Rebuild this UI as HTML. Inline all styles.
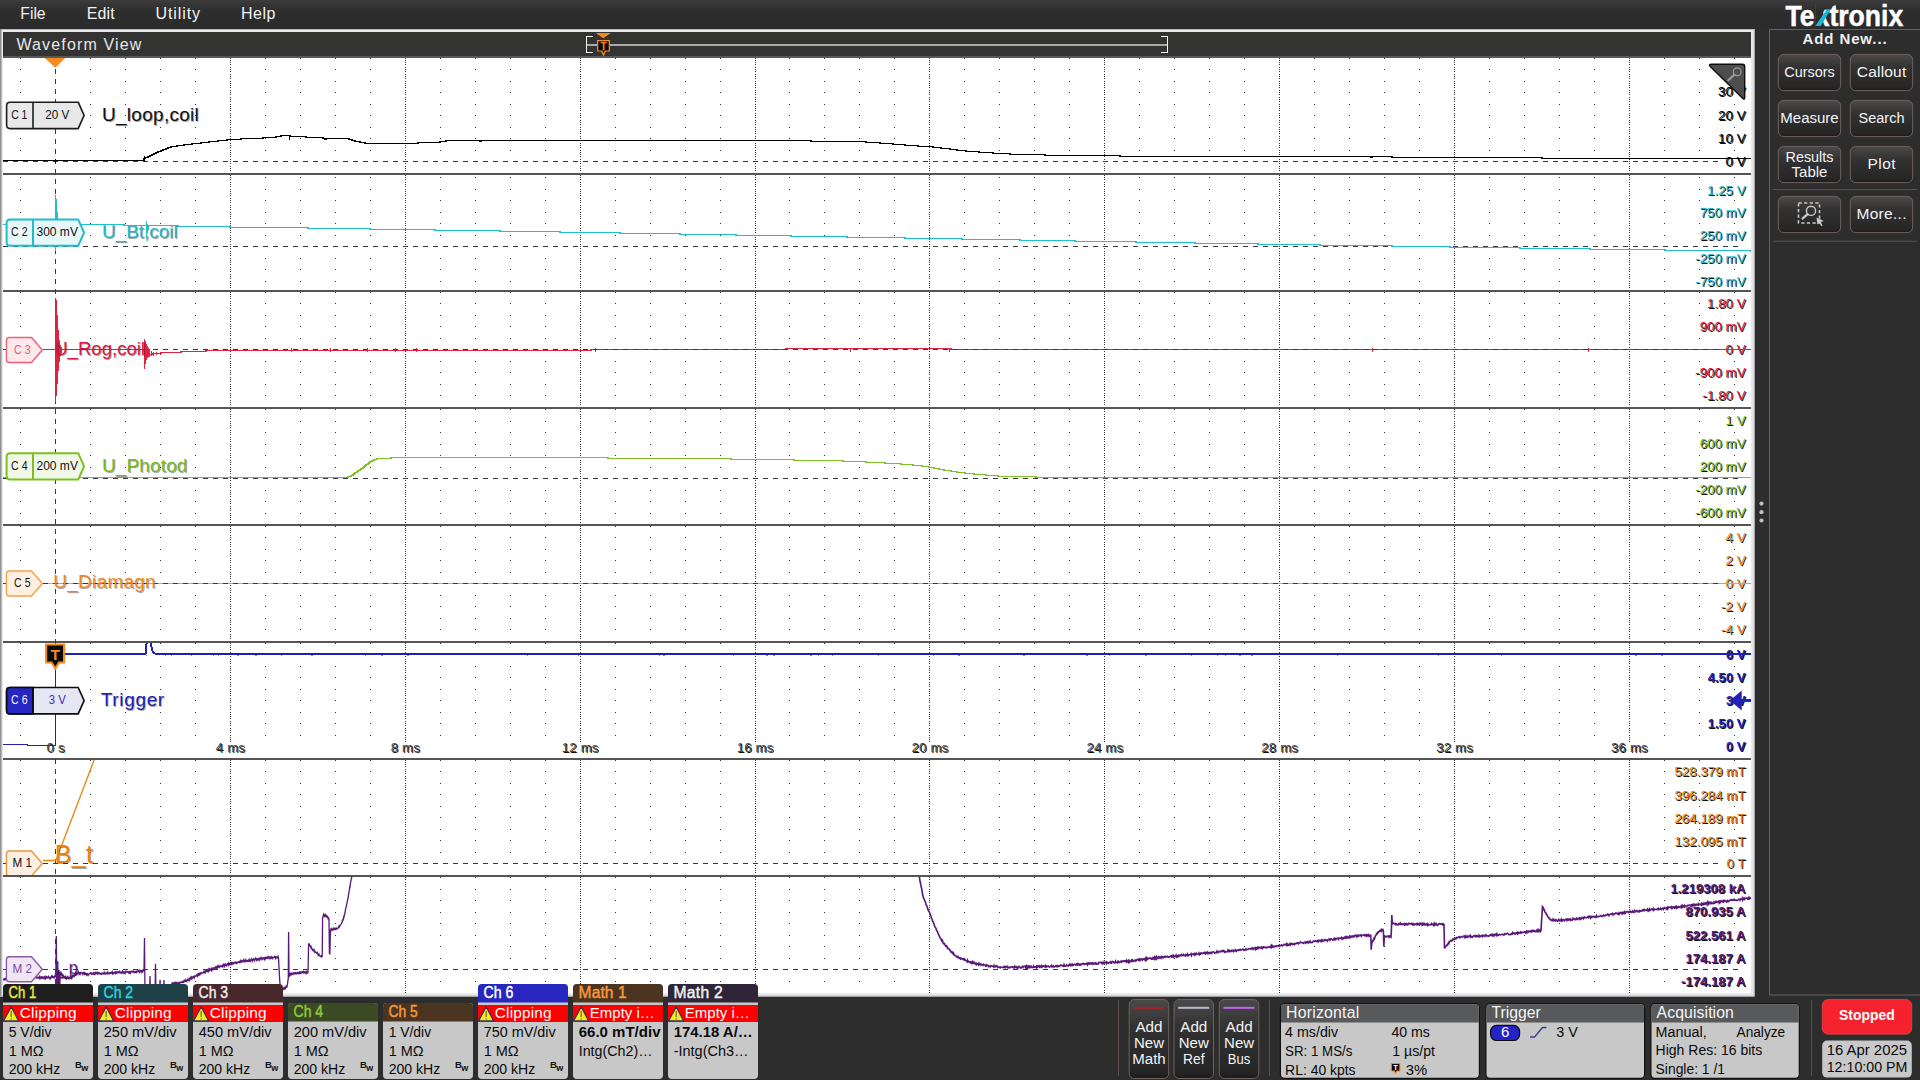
<!DOCTYPE html>
<html><head><meta charset="utf-8"><title>Waveform View</title>
<style>
html,body{margin:0;padding:0;background:#2d2d2d;overflow:hidden}
svg{display:block;font-family:'Liberation Sans', sans-serif}
text{white-space:pre}
.sh{text-shadow:1px 1px 0 rgba(0,0,0,.95)}
.sl{text-shadow:1px 1px 0 rgba(0,0,0,.35)}
.ce{shape-rendering:crispEdges}
</style></head><body>
<svg width="1920" height="1080" viewBox="0 0 1920 1080">
<defs>
<linearGradient id="mb" gradientUnits="userSpaceOnUse" x1="0" y1="0" x2="0" y2="28.5"><stop offset="0" stop-color="#3c3c3c"/><stop offset="0.35" stop-color="#2e2e2e"/><stop offset="1" stop-color="#2b2b2b"/></linearGradient>
<linearGradient id="bt" x1="0" y1="0" x2="0" y2="1"><stop offset="0" stop-color="#4a4a4b"/><stop offset="0.35" stop-color="#323233"/><stop offset="0.9" stop-color="#262626"/><stop offset="1" stop-color="#1c1c1c"/></linearGradient>
</defs>
<rect x="0" y="0" width="1920" height="1080" fill="#2d2d2d" />
<rect x="0" y="0" width="1920" height="28.5" fill="url(#mb)" />
<text x="20.3" y="18.7" font-size="16" fill="#f2f2f2" textLength="25.3" lengthAdjust="spacingAndGlyphs">File</text>
<text x="86.7" y="18.7" font-size="16" fill="#f2f2f2" textLength="28.1" lengthAdjust="spacing">Edit</text>
<text x="155.5" y="18.7" font-size="16" fill="#f2f2f2" textLength="44.5" lengthAdjust="spacing">Utility</text>
<text x="241" y="18.7" font-size="16" fill="#f2f2f2" textLength="34.5" lengthAdjust="spacing">Help</text>
<rect x="0" y="29" width="1754.5" height="967.5" fill="#e9e9eb" />
<rect x="0" y="29" width="1754.5" height="0.8" fill="#b0b0b2" />
<rect x="0" y="29" width="1.5" height="967" fill="#909092" />
<rect x="1753.5" y="29.5" width="1" height="966.5" fill="#c9c9cc" />
<rect x="0" y="995.5" width="1754.5" height="1" fill="#bdbdbf" />
<rect x="3" y="32" width="1748" height="24" fill="#333332" />
<rect x="3" y="56" width="1748" height="2" fill="#58595b" />
<text x="16.4" y="49.7" font-size="16" fill="#e6e6e6" textLength="125" lengthAdjust="spacing">Waveform View</text>
<g fill="none" stroke="#f4f4f4" stroke-width="1" class="ce"><path d="M593,36.5H586.5V52.5H593"/><path d="M1161,36.5H1167.5V52.5H1161"/></g>
<rect x="587" y="44" width="580" height="2" fill="#a9a9a9" />
<path d="M595.8,33H610.8L603.3,38.2Z" fill="#f58a1f"/>
<path d="M597,40H610V51.5H605.8L603.5,56.5L601.2,51.5H597Z" fill="#f58a1f"/>
<rect x="598.3" y="41.3" width="10.4" height="9.2" fill="#0a0a0a" />
<path d="M602.2,50.4L603.5,53.2L604.8,50.4Z" fill="#0a0a0a"/>
<text x="603.5" y="49.8" font-size="10" fill="#f58a1f" text-anchor="middle" font-weight="bold">T</text>
<rect x="3" y="58" width="1748" height="935" fill="#ffffff" />
<defs><path id="dr" d="M20,0.5h1M90,0.5h1M125,0.5h1M160,0.5h1M195,0.5h1M265,0.5h1M300,0.5h1M335,0.5h1M370,0.5h1M440,0.5h1M475,0.5h1M510,0.5h1M545,0.5h1M615,0.5h1M650,0.5h1M685,0.5h1M720,0.5h1M789,0.5h1M824,0.5h1M859,0.5h1M894,0.5h1M964,0.5h1M999,0.5h1M1034,0.5h1M1069,0.5h1M1139,0.5h1M1174,0.5h1M1209,0.5h1M1244,0.5h1M1314,0.5h1M1349,0.5h1M1384,0.5h1M1419,0.5h1M1489,0.5h1M1524,0.5h1M1559,0.5h1M1594,0.5h1M1664,0.5h1M1699,0.5h1M1734,0.5h1" stroke="#303030" stroke-width="1" class="ce"/></defs>
<use href="#dr" y="58"/><use href="#dr" y="69"/><use href="#dr" y="81"/><use href="#dr" y="92"/><use href="#dr" y="104"/><use href="#dr" y="115"/><use href="#dr" y="127"/><use href="#dr" y="138"/><use href="#dr" y="150"/>
<use href="#dr" y="177"/><use href="#dr" y="189"/><use href="#dr" y="200"/><use href="#dr" y="212"/><use href="#dr" y="223"/><use href="#dr" y="235"/><use href="#dr" y="258"/><use href="#dr" y="269"/><use href="#dr" y="281"/>
<use href="#dr" y="292"/><use href="#dr" y="303"/><use href="#dr" y="315"/><use href="#dr" y="326"/><use href="#dr" y="338"/><use href="#dr" y="361"/><use href="#dr" y="372"/><use href="#dr" y="384"/><use href="#dr" y="395"/>
<use href="#dr" y="409"/><use href="#dr" y="421"/><use href="#dr" y="432"/><use href="#dr" y="444"/><use href="#dr" y="455"/><use href="#dr" y="467"/><use href="#dr" y="490"/><use href="#dr" y="501"/><use href="#dr" y="513"/>
<use href="#dr" y="526"/><use href="#dr" y="537"/><use href="#dr" y="549"/><use href="#dr" y="560"/><use href="#dr" y="572"/><use href="#dr" y="595"/><use href="#dr" y="606"/><use href="#dr" y="618"/><use href="#dr" y="629"/>
<use href="#dr" y="643"/><use href="#dr" y="654"/><use href="#dr" y="666"/><use href="#dr" y="677"/><use href="#dr" y="689"/><use href="#dr" y="700"/><use href="#dr" y="712"/><use href="#dr" y="723"/><use href="#dr" y="735"/>
<use href="#dr" y="760"/><use href="#dr" y="771"/><use href="#dr" y="783"/><use href="#dr" y="794"/><use href="#dr" y="806"/><use href="#dr" y="817"/><use href="#dr" y="829"/><use href="#dr" y="840"/><use href="#dr" y="852"/>
<use href="#dr" y="877"/><use href="#dr" y="889"/><use href="#dr" y="900"/><use href="#dr" y="912"/><use href="#dr" y="923"/><use href="#dr" y="935"/><use href="#dr" y="946"/><use href="#dr" y="958"/><use href="#dr" y="981"/>
<defs><path id="vc0" d="M0,58.5h1M0,60.5h1M0,62.5h1M0,64.5h1M0,67.5h1M0,69.5h1M0,71.5h1M0,74.5h1M0,76.5h1M0,78.5h1M0,81.5h1M0,83.5h1M0,85.5h1M0,87.5h1M0,90.5h1M0,92.5h1M0,94.5h1M0,97.5h1M0,99.5h1M0,101.5h1M0,104.5h1M0,106.5h1M0,108.5h1M0,110.5h1M0,113.5h1M0,115.5h1M0,117.5h1M0,120.5h1M0,122.5h1M0,124.5h1M0,127.5h1M0,129.5h1M0,131.5h1M0,133.5h1M0,136.5h1M0,138.5h1M0,140.5h1M0,143.5h1M0,145.5h1M0,147.5h1M0,150.5h1M0,152.5h1M0,154.5h1M0,156.5h1M0,159.5h1M0,161.5h1M0,163.5h1M0,166.5h1M0,168.5h1M0,170.5h1" stroke="#333" stroke-width="1" class="ce"/><path id="vc1" d="M0,175.5h1M0,177.5h1M0,179.5h1M0,182.5h1M0,184.5h1M0,186.5h1M0,189.5h1M0,191.5h1M0,193.5h1M0,195.5h1M0,198.5h1M0,200.5h1M0,202.5h1M0,205.5h1M0,207.5h1M0,209.5h1M0,212.5h1M0,214.5h1M0,216.5h1M0,218.5h1M0,221.5h1M0,223.5h1M0,225.5h1M0,228.5h1M0,230.5h1M0,232.5h1M0,235.5h1M0,237.5h1M0,239.5h1M0,241.5h1M0,244.5h1M0,246.5h1M0,248.5h1M0,251.5h1M0,253.5h1M0,255.5h1M0,258.5h1M0,260.5h1M0,262.5h1M0,264.5h1M0,267.5h1M0,269.5h1M0,271.5h1M0,274.5h1M0,276.5h1M0,278.5h1M0,281.5h1M0,283.5h1M0,285.5h1M0,287.5h1" stroke="#333" stroke-width="1" class="ce"/><path id="vc2" d="M0,292.5h1M0,294.5h1M0,296.5h1M0,298.5h1M0,301.5h1M0,303.5h1M0,305.5h1M0,308.5h1M0,310.5h1M0,312.5h1M0,315.5h1M0,317.5h1M0,319.5h1M0,321.5h1M0,324.5h1M0,326.5h1M0,328.5h1M0,331.5h1M0,333.5h1M0,335.5h1M0,338.5h1M0,340.5h1M0,342.5h1M0,344.5h1M0,347.5h1M0,349.5h1M0,351.5h1M0,354.5h1M0,356.5h1M0,358.5h1M0,361.5h1M0,363.5h1M0,365.5h1M0,367.5h1M0,370.5h1M0,372.5h1M0,374.5h1M0,377.5h1M0,379.5h1M0,381.5h1M0,384.5h1M0,386.5h1M0,388.5h1M0,390.5h1M0,393.5h1M0,395.5h1M0,397.5h1M0,400.5h1M0,402.5h1M0,404.5h1" stroke="#333" stroke-width="1" class="ce"/><path id="vc3" d="M0,409.5h1M0,411.5h1M0,414.5h1M0,416.5h1M0,418.5h1M0,421.5h1M0,423.5h1M0,425.5h1M0,427.5h1M0,430.5h1M0,432.5h1M0,434.5h1M0,437.5h1M0,439.5h1M0,441.5h1M0,444.5h1M0,446.5h1M0,448.5h1M0,450.5h1M0,453.5h1M0,455.5h1M0,457.5h1M0,460.5h1M0,462.5h1M0,464.5h1M0,467.5h1M0,469.5h1M0,471.5h1M0,473.5h1M0,476.5h1M0,478.5h1M0,480.5h1M0,483.5h1M0,485.5h1M0,487.5h1M0,490.5h1M0,492.5h1M0,494.5h1M0,496.5h1M0,499.5h1M0,501.5h1M0,503.5h1M0,506.5h1M0,508.5h1M0,510.5h1M0,513.5h1M0,515.5h1M0,517.5h1M0,519.5h1M0,522.5h1" stroke="#333" stroke-width="1" class="ce"/><path id="vc4" d="M0,526.5h1M0,528.5h1M0,530.5h1M0,532.5h1M0,535.5h1M0,537.5h1M0,539.5h1M0,542.5h1M0,544.5h1M0,546.5h1M0,549.5h1M0,551.5h1M0,553.5h1M0,555.5h1M0,558.5h1M0,560.5h1M0,562.5h1M0,565.5h1M0,567.5h1M0,569.5h1M0,572.5h1M0,574.5h1M0,576.5h1M0,578.5h1M0,581.5h1M0,583.5h1M0,585.5h1M0,588.5h1M0,590.5h1M0,592.5h1M0,595.5h1M0,597.5h1M0,599.5h1M0,601.5h1M0,604.5h1M0,606.5h1M0,608.5h1M0,611.5h1M0,613.5h1M0,615.5h1M0,618.5h1M0,620.5h1M0,622.5h1M0,624.5h1M0,627.5h1M0,629.5h1M0,631.5h1M0,634.5h1M0,636.5h1M0,638.5h1" stroke="#333" stroke-width="1" class="ce"/><path id="vc5" d="M0,643.5h1M0,645.5h1M0,647.5h1M0,649.5h1M0,652.5h1M0,654.5h1M0,656.5h1M0,659.5h1M0,661.5h1M0,663.5h1M0,666.5h1M0,668.5h1M0,670.5h1M0,672.5h1M0,675.5h1M0,677.5h1M0,679.5h1M0,682.5h1M0,684.5h1M0,686.5h1M0,689.5h1M0,691.5h1M0,693.5h1M0,695.5h1M0,698.5h1M0,700.5h1M0,702.5h1M0,705.5h1M0,707.5h1M0,709.5h1M0,712.5h1M0,714.5h1M0,716.5h1M0,718.5h1M0,721.5h1M0,723.5h1M0,725.5h1M0,728.5h1M0,730.5h1M0,732.5h1M0,735.5h1M0,737.5h1M0,739.5h1M0,741.5h1M0,744.5h1M0,746.5h1M0,748.5h1M0,751.5h1M0,753.5h1M0,755.5h1" stroke="#333" stroke-width="1" class="ce"/><path id="vc6" d="M0,760.5h1M0,762.5h1M0,764.5h1M0,766.5h1M0,769.5h1M0,771.5h1M0,773.5h1M0,776.5h1M0,778.5h1M0,780.5h1M0,783.5h1M0,785.5h1M0,787.5h1M0,789.5h1M0,792.5h1M0,794.5h1M0,796.5h1M0,799.5h1M0,801.5h1M0,803.5h1M0,806.5h1M0,808.5h1M0,810.5h1M0,812.5h1M0,815.5h1M0,817.5h1M0,819.5h1M0,822.5h1M0,824.5h1M0,826.5h1M0,829.5h1M0,831.5h1M0,833.5h1M0,835.5h1M0,838.5h1M0,840.5h1M0,842.5h1M0,845.5h1M0,847.5h1M0,849.5h1M0,852.5h1M0,854.5h1M0,856.5h1M0,858.5h1M0,861.5h1M0,863.5h1M0,865.5h1M0,868.5h1M0,870.5h1M0,872.5h1" stroke="#333" stroke-width="1" class="ce"/><path id="vc7" d="M0,877.5h1M0,879.5h1M0,882.5h1M0,884.5h1M0,886.5h1M0,889.5h1M0,891.5h1M0,893.5h1M0,895.5h1M0,898.5h1M0,900.5h1M0,902.5h1M0,905.5h1M0,907.5h1M0,909.5h1M0,912.5h1M0,914.5h1M0,916.5h1M0,918.5h1M0,921.5h1M0,923.5h1M0,925.5h1M0,928.5h1M0,930.5h1M0,932.5h1M0,935.5h1M0,937.5h1M0,939.5h1M0,941.5h1M0,944.5h1M0,946.5h1M0,948.5h1M0,951.5h1M0,953.5h1M0,955.5h1M0,958.5h1M0,960.5h1M0,962.5h1M0,964.5h1M0,967.5h1M0,969.5h1M0,971.5h1M0,974.5h1M0,976.5h1M0,978.5h1M0,981.5h1M0,983.5h1M0,985.5h1M0,987.5h1M0,990.5h1M0,992.5h1" stroke="#333" stroke-width="1" class="ce"/></defs>
<use href="#vc0" x="230"/><use href="#vc0" x="405"/><use href="#vc0" x="580"/><use href="#vc0" x="755"/><use href="#vc0" x="929"/><use href="#vc0" x="1104"/><use href="#vc0" x="1279"/><use href="#vc0" x="1454"/><use href="#vc0" x="1629"/>
<use href="#vc1" x="230"/><use href="#vc1" x="405"/><use href="#vc1" x="580"/><use href="#vc1" x="755"/><use href="#vc1" x="929"/><use href="#vc1" x="1104"/><use href="#vc1" x="1279"/><use href="#vc1" x="1454"/><use href="#vc1" x="1629"/>
<use href="#vc2" x="230"/><use href="#vc2" x="405"/><use href="#vc2" x="580"/><use href="#vc2" x="755"/><use href="#vc2" x="929"/><use href="#vc2" x="1104"/><use href="#vc2" x="1279"/><use href="#vc2" x="1454"/><use href="#vc2" x="1629"/>
<use href="#vc3" x="230"/><use href="#vc3" x="405"/><use href="#vc3" x="580"/><use href="#vc3" x="755"/><use href="#vc3" x="929"/><use href="#vc3" x="1104"/><use href="#vc3" x="1279"/><use href="#vc3" x="1454"/><use href="#vc3" x="1629"/>
<use href="#vc4" x="230"/><use href="#vc4" x="405"/><use href="#vc4" x="580"/><use href="#vc4" x="755"/><use href="#vc4" x="929"/><use href="#vc4" x="1104"/><use href="#vc4" x="1279"/><use href="#vc4" x="1454"/><use href="#vc4" x="1629"/>
<use href="#vc5" x="230"/><use href="#vc5" x="405"/><use href="#vc5" x="580"/><use href="#vc5" x="755"/><use href="#vc5" x="929"/><use href="#vc5" x="1104"/><use href="#vc5" x="1279"/><use href="#vc5" x="1454"/><use href="#vc5" x="1629"/>
<use href="#vc6" x="230"/><use href="#vc6" x="405"/><use href="#vc6" x="580"/><use href="#vc6" x="755"/><use href="#vc6" x="929"/><use href="#vc6" x="1104"/><use href="#vc6" x="1279"/><use href="#vc6" x="1454"/><use href="#vc6" x="1629"/>
<use href="#vc7" x="230"/><use href="#vc7" x="405"/><use href="#vc7" x="580"/><use href="#vc7" x="755"/><use href="#vc7" x="929"/><use href="#vc7" x="1104"/><use href="#vc7" x="1279"/><use href="#vc7" x="1454"/><use href="#vc7" x="1629"/>
<rect x="3" y="173" width="1748" height="2" fill="#555556" />
<rect x="3" y="290" width="1748" height="2" fill="#555556" />
<rect x="3" y="407" width="1748" height="2" fill="#555556" />
<rect x="3" y="524" width="1748" height="2" fill="#555556" />
<rect x="3" y="641" width="1748" height="2" fill="#555556" />
<rect x="3" y="758" width="1748" height="2" fill="#555556" />
<rect x="3" y="875" width="1748" height="2" fill="#555556" />
<g stroke="#383838" stroke-width="1" stroke-dasharray="5 5" class="ce">
<path d="M3,161.5H1718"/><path d="M3,246.5H1738"/><path d="M3,349.5H1718"/><path d="M3,478.5H1738"/><path d="M3,583.5H1718"/><path d="M3,863.5H1718"/><path d="M3,969.5H1738"/><path d="M55.5,69V993"/></g>
<rect x="1713.57" y="85.2" width="36.93" height="15" fill="#fff" />
<rect x="1713.57" y="108.5" width="36.93" height="15" fill="#fff" />
<rect x="1713.57" y="131.5" width="36.93" height="15" fill="#fff" />
<rect x="1720.99" y="154.3" width="29.51" height="15" fill="#fff" />
<rect x="1702.46" y="183.3" width="48.04" height="15" fill="#fff" />
<rect x="1695.05" y="205.8" width="55.45" height="15" fill="#fff" />
<rect x="1695.05" y="228.8" width="55.45" height="15" fill="#fff" />
<rect x="1690.61" y="251.9" width="59.89" height="15" fill="#fff" />
<rect x="1690.61" y="274.9" width="59.89" height="15" fill="#fff" />
<rect x="1702.46" y="296.6" width="48.04" height="15" fill="#fff" />
<rect x="1695.05" y="319.5" width="55.45" height="15" fill="#fff" />
<rect x="1720.99" y="342.5" width="29.51" height="15" fill="#fff" />
<rect x="1690.61" y="365.9" width="59.89" height="15" fill="#fff" />
<rect x="1698.02" y="388.8" width="52.48" height="15" fill="#fff" />
<rect x="1720.99" y="413.8" width="29.51" height="15" fill="#fff" />
<rect x="1695.05" y="436.6" width="55.45" height="15" fill="#fff" />
<rect x="1695.05" y="460" width="55.45" height="15" fill="#fff" />
<rect x="1690.61" y="482.8" width="59.89" height="15" fill="#fff" />
<rect x="1690.61" y="505.9" width="59.89" height="15" fill="#fff" />
<rect x="1720.99" y="530.5" width="29.51" height="15" fill="#fff" />
<rect x="1720.99" y="553.8" width="29.51" height="15" fill="#fff" />
<rect x="1720.99" y="576.7" width="29.51" height="15" fill="#fff" />
<rect x="1716.55" y="599.8" width="33.95" height="15" fill="#fff" />
<rect x="1716.55" y="623.2" width="33.95" height="15" fill="#fff" />
<rect x="1721.29" y="647.9" width="29.21" height="15" fill="#fff" />
<rect x="1703.04" y="670.7" width="47.46" height="15" fill="#fff" />
<rect x="1721.29" y="693.8" width="29.21" height="15" fill="#fff" />
<rect x="1703.04" y="716.8" width="47.46" height="15" fill="#fff" />
<rect x="1721.29" y="739.6" width="29.21" height="15" fill="#fff" />
<rect x="1669.86" y="765.2" width="80.64" height="15" fill="#fff" />
<rect x="1669.86" y="788.3" width="80.64" height="15" fill="#fff" />
<rect x="1669.86" y="811.3" width="80.64" height="15" fill="#fff" />
<rect x="1669.86" y="834.4" width="80.64" height="15" fill="#fff" />
<rect x="1721.98" y="856.8" width="28.52" height="15" fill="#fff" />
<rect x="1665.8" y="882" width="84.7" height="15" fill="#fff" />
<rect x="1680.89" y="904.6" width="69.61" height="15" fill="#fff" />
<rect x="1680.89" y="928.9" width="69.61" height="15" fill="#fff" />
<rect x="1680.89" y="952" width="69.61" height="15" fill="#fff" />
<rect x="1676.52" y="975.2" width="73.98" height="15" fill="#fff" />
<text x="1745.6" y="96.4" font-size="13.4" fill="#000000" text-anchor="end" class="sh">30 V</text>
<text x="1745.6" y="119.7" font-size="13.4" fill="#000000" text-anchor="end" class="sh">20 V</text>
<text x="1745.6" y="142.7" font-size="13.4" fill="#000000" text-anchor="end" class="sh">10 V</text>
<text x="1745.6" y="165.5" font-size="13.4" fill="#000000" text-anchor="end" class="sh">0 V</text>
<text x="1745.6" y="194.5" font-size="13.4" fill="#1fbfcc" text-anchor="end" textLength="38.54" lengthAdjust="spacingAndGlyphs" class="sh">1.25 V</text>
<text x="1745.6" y="217" font-size="13.4" fill="#1fbfcc" text-anchor="end" textLength="45.95" lengthAdjust="spacingAndGlyphs" class="sh">750 mV</text>
<text x="1745.6" y="240" font-size="13.4" fill="#1fbfcc" text-anchor="end" textLength="45.95" lengthAdjust="spacingAndGlyphs" class="sh">250 mV</text>
<text x="1745.6" y="263.1" font-size="13.4" fill="#1fbfcc" text-anchor="end" textLength="50.39" lengthAdjust="spacingAndGlyphs" class="sh">-250 mV</text>
<text x="1745.6" y="286.1" font-size="13.4" fill="#1fbfcc" text-anchor="end" textLength="50.39" lengthAdjust="spacingAndGlyphs" class="sh">-750 mV</text>
<text x="1745.6" y="307.8" font-size="13.4" fill="#d9193c" text-anchor="end" textLength="38.54" lengthAdjust="spacingAndGlyphs" class="sh">1.80 V</text>
<text x="1745.6" y="330.7" font-size="13.4" fill="#d9193c" text-anchor="end" textLength="45.95" lengthAdjust="spacingAndGlyphs" class="sh">900 mV</text>
<text x="1745.6" y="353.7" font-size="13.4" fill="#d9193c" text-anchor="end" class="sh">0 V</text>
<text x="1745.6" y="377.1" font-size="13.4" fill="#d9193c" text-anchor="end" textLength="50.39" lengthAdjust="spacingAndGlyphs" class="sh">-900 mV</text>
<text x="1745.6" y="400" font-size="13.4" fill="#d9193c" text-anchor="end" textLength="42.98" lengthAdjust="spacingAndGlyphs" class="sh">-1.80 V</text>
<text x="1745.6" y="425" font-size="13.4" fill="#74b81e" text-anchor="end" class="sh">1 V</text>
<text x="1745.6" y="447.8" font-size="13.4" fill="#74b81e" text-anchor="end" textLength="45.95" lengthAdjust="spacingAndGlyphs" class="sh">600 mV</text>
<text x="1745.6" y="471.2" font-size="13.4" fill="#74b81e" text-anchor="end" textLength="45.95" lengthAdjust="spacingAndGlyphs" class="sh">200 mV</text>
<text x="1745.6" y="494" font-size="13.4" fill="#74b81e" text-anchor="end" textLength="50.39" lengthAdjust="spacingAndGlyphs" class="sh">-200 mV</text>
<text x="1745.6" y="517.1" font-size="13.4" fill="#74b81e" text-anchor="end" textLength="50.39" lengthAdjust="spacingAndGlyphs" class="sh">-600 mV</text>
<text x="1745.6" y="541.7" font-size="13.4" fill="#f28c28" text-anchor="end" class="sh">4 V</text>
<text x="1745.6" y="565" font-size="13.4" fill="#f28c28" text-anchor="end" class="sh">2 V</text>
<text x="1745.6" y="587.9" font-size="13.4" fill="#f28c28" text-anchor="end" class="sh">0 V</text>
<text x="1745.6" y="611" font-size="13.4" fill="#f28c28" text-anchor="end" class="sh">-2 V</text>
<text x="1745.6" y="634.4" font-size="13.4" fill="#f28c28" text-anchor="end" class="sh">-4 V</text>
<text x="1745.6" y="659.1" font-size="13.4" fill="#2323b8" text-anchor="end" font-weight="bold" textLength="19.71" lengthAdjust="spacingAndGlyphs" class="sh">6 V</text>
<text x="1745.6" y="681.9" font-size="13.4" fill="#2323b8" text-anchor="end" font-weight="bold" textLength="37.96" lengthAdjust="spacingAndGlyphs" class="sh">4.50 V</text>
<text x="1745.6" y="705" font-size="13.4" fill="#2323b8" text-anchor="end" font-weight="bold" textLength="19.71" lengthAdjust="spacingAndGlyphs" class="sh">3 V</text>
<text x="1745.6" y="728" font-size="13.4" fill="#2323b8" text-anchor="end" font-weight="bold" textLength="37.96" lengthAdjust="spacingAndGlyphs" class="sh">1.50 V</text>
<text x="1745.6" y="750.8" font-size="13.4" fill="#2323b8" text-anchor="end" font-weight="bold" textLength="19.71" lengthAdjust="spacingAndGlyphs" class="sh">0 V</text>
<text x="1745.6" y="776.4" font-size="13.4" fill="#e8820c" text-anchor="end" textLength="71.14" lengthAdjust="spacingAndGlyphs" class="sh">528.379 mT</text>
<text x="1745.6" y="799.5" font-size="13.4" fill="#e8820c" text-anchor="end" textLength="71.14" lengthAdjust="spacingAndGlyphs" class="sh">396.284 mT</text>
<text x="1745.6" y="822.5" font-size="13.4" fill="#e8820c" text-anchor="end" textLength="71.14" lengthAdjust="spacingAndGlyphs" class="sh">264.189 mT</text>
<text x="1745.6" y="845.6" font-size="13.4" fill="#e8820c" text-anchor="end" textLength="71.14" lengthAdjust="spacingAndGlyphs" class="sh">132.095 mT</text>
<text x="1745.6" y="868" font-size="13.4" fill="#e8820c" text-anchor="end" class="sh">0 T</text>
<text x="1745.6" y="893.2" font-size="13.4" fill="#5a1a78" text-anchor="end" font-weight="bold" textLength="75.2" lengthAdjust="spacingAndGlyphs" class="sh">1.219308 kA</text>
<text x="1745.6" y="915.8" font-size="13.4" fill="#5a1a78" text-anchor="end" font-weight="bold" textLength="60.11" lengthAdjust="spacingAndGlyphs" class="sh">870.935 A</text>
<text x="1745.6" y="940.1" font-size="13.4" fill="#5a1a78" text-anchor="end" font-weight="bold" textLength="60.11" lengthAdjust="spacingAndGlyphs" class="sh">522.561 A</text>
<text x="1745.6" y="963.2" font-size="13.4" fill="#5a1a78" text-anchor="end" font-weight="bold" textLength="60.11" lengthAdjust="spacingAndGlyphs" class="sh">174.187 A</text>
<text x="1745.6" y="986.4" font-size="13.4" fill="#5a1a78" text-anchor="end" font-weight="bold" textLength="64.48" lengthAdjust="spacingAndGlyphs" class="sh">-174.187 A</text>
<rect x="44.52" y="742.5" width="21.96" height="15.5" fill="#fff" />
<text x="55.5" y="752" font-size="13.2" fill="#4a4a4a" text-anchor="middle" textLength="17.96" lengthAdjust="spacing" class="sh">0 s</text>
<rect x="213.79" y="742.5" width="33.17" height="15.5" fill="#fff" />
<text x="230.38" y="752" font-size="13.2" fill="#4a4a4a" text-anchor="middle" textLength="29.17" lengthAdjust="spacing" class="sh">4 ms</text>
<rect x="388.66" y="742.5" width="33.17" height="15.5" fill="#fff" />
<text x="405.25" y="752" font-size="13.2" fill="#4a4a4a" text-anchor="middle" textLength="29.17" lengthAdjust="spacing" class="sh">8 ms</text>
<rect x="559.79" y="742.5" width="40.66" height="15.5" fill="#fff" />
<text x="580.12" y="752" font-size="13.2" fill="#4a4a4a" text-anchor="middle" textLength="36.66" lengthAdjust="spacing" class="sh">12 ms</text>
<rect x="734.67" y="742.5" width="40.66" height="15.5" fill="#fff" />
<text x="755" y="752" font-size="13.2" fill="#4a4a4a" text-anchor="middle" textLength="36.66" lengthAdjust="spacing" class="sh">16 ms</text>
<rect x="909.54" y="742.5" width="40.66" height="15.5" fill="#fff" />
<text x="929.88" y="752" font-size="13.2" fill="#4a4a4a" text-anchor="middle" textLength="36.66" lengthAdjust="spacing" class="sh">20 ms</text>
<rect x="1084.42" y="742.5" width="40.66" height="15.5" fill="#fff" />
<text x="1104.75" y="752" font-size="13.2" fill="#4a4a4a" text-anchor="middle" textLength="36.66" lengthAdjust="spacing" class="sh">24 ms</text>
<rect x="1259.29" y="742.5" width="40.66" height="15.5" fill="#fff" />
<text x="1279.62" y="752" font-size="13.2" fill="#4a4a4a" text-anchor="middle" textLength="36.66" lengthAdjust="spacing" class="sh">28 ms</text>
<rect x="1434.17" y="742.5" width="40.66" height="15.5" fill="#fff" />
<text x="1454.5" y="752" font-size="13.2" fill="#4a4a4a" text-anchor="middle" textLength="36.66" lengthAdjust="spacing" class="sh">32 ms</text>
<rect x="1609.04" y="742.5" width="40.66" height="15.5" fill="#fff" />
<text x="1629.38" y="752" font-size="13.2" fill="#4a4a4a" text-anchor="middle" textLength="36.66" lengthAdjust="spacing" class="sh">36 ms</text>
<defs><clipPath id="c0"><rect x="3" y="58" width="1748" height="115"/></clipPath><clipPath id="c1"><rect x="3" y="175" width="1748" height="115"/></clipPath><clipPath id="c2"><rect x="3" y="292" width="1748" height="115"/></clipPath><clipPath id="c3"><rect x="3" y="409" width="1748" height="115"/></clipPath><clipPath id="c4"><rect x="3" y="526" width="1748" height="115"/></clipPath><clipPath id="c5"><rect x="3" y="643" width="1748" height="115"/></clipPath><clipPath id="c6"><rect x="3" y="760" width="1748" height="115"/></clipPath><clipPath id="c7"><rect x="3" y="877" width="1748" height="116"/></clipPath></defs>
<g clip-path="url(#c0)" class="ce"><polyline points="3,160.5 144,160.5 144,158.5 145,158.5 145,157.5 148,157.5 148,156.5 150,156.5 150,155.5 152,155.5 152,154.5 154,154.5 154,153.5 156,153.5 156,152.5 158,152.5 158,151.5 161,151.5 161,150.5 163,150.5 163,149.5 166,149.5 166,148.5 168,148.5 168,147.5 171,147.5 171,146.5 177,146.5 177,145.5 184,145.5 184,144.5 192,144.5 192,143.5 201,143.5 201,142.5 209,142.5 209,141.5 218,141.5 218,140.5 227,140.5 227,139.5 241,139.5 241,138.5 263,138.5 263,137.5 276,137.5 276,136.5 281,136.5 281,135.5 290,135.5 290,136.5 306,136.5 306,137.5 323,137.5 323,138.5 325,138.5 325,139.5 326,139.5 326,138.5 349,138.5 349,139.5 352,139.5 352,140.5 355,140.5 355,141.5 360,141.5 360,142.5 365,142.5 365,143.5 418,143.5 418,142.5 440,142.5 440,141.5 446,141.5 446,140.5 480,140.5 480,141.5 481,141.5 481,140.5 811,140.5 811,141.5 866,141.5 866,142.5 880,142.5 880,143.5 893,143.5 893,144.5 905,144.5 905,145.5 918,145.5 918,146.5 933,146.5 933,147.5 941,147.5 941,148.5 950,148.5 950,149.5 957,149.5 957,150.5 966,150.5 966,151.5 979,151.5 979,152.5 993,152.5 993,153.5 1010,153.5 1010,154.5 1045,154.5 1045,155.5 1120,155.5 1120,156.5 1371,156.5 1371,157.5 1372,157.5 1372,156.5 1392,156.5 1392,157.5 1542,157.5 1542,158.5 1751,158.5" fill="none" stroke="#000" stroke-width="1.25" />
<path d="M55.5,159V162.5M144.5,156V162M289.5,135V139.5" stroke="#000" stroke-width="1.2"/></g>
<g clip-path="url(#c1)" class="ce"><polyline points="3,224.5 124,224.5 124,225.5 178,225.5 178,226.5 230,226.5 230,227.5 308,227.5 308,228.5 370,228.5 370,229.5 435,229.5 435,230.5 500,230.5 500,231.5 560,231.5 560,232.5 620,232.5 620,233.5 680,233.5 680,234.5 736,234.5 736,235.5 791,235.5 791,236.5 847,236.5 847,237.5 905,237.5 905,238.5 962,238.5 962,239.5 1020,239.5 1020,240.5 1075,240.5 1075,241.5 1136,241.5 1136,242.5 1195,242.5 1195,243.5 1258,243.5 1258,244.5 1320,244.5 1320,245.5 1392,245.5 1392,246.5 1450,246.5 1450,247.5 1520,247.5 1520,248.5 1590,248.5 1590,249.5 1665,249.5 1665,250.5 1751,250.5 1751,251.5" fill="none" stroke="#1fbfcc" stroke-width="1.25" />
<path d="M55.5,194.5V251M56.5,199V232M57.5,212V228M146.5,221V238M147.5,224V233M148.5,226V230" stroke="#1fbfcc" stroke-width="1"/></g>
<g clip-path="url(#c2)" class="ce"><polyline points="43,349.5 144,349.5 144,350.5 145,350.5 145,351.5 147,351.5 147,352.5 148,352.5 148,353.5 149,353.5 149,354.5 152,354.5 152,353.5 161,353.5 161,352.5 181,352.5 181,351.5 206,351.5 206,350.5 591,350.5 591,349.5 786,349.5 786,348.5 951,348.5 951,349.5 1751,349.5" fill="none" stroke="#e0223f" stroke-width="1.25" />
<path d="M55.5,297.5V401.5M56.5,300V396M57.5,315V384M58.5,330V371M59.5,340V362M60.5,345V356M61.5,347V353M144.5,339V368.5M145.5,341V364M146.5,344V360M147.5,346V358M148.5,347.5V357M149.5,349V356.5M151.5,351V356M153.5,351.5V355.5M156.5,351.5V355M160.5,351.5V354.5M291.5,348V352M330.5,348V352M367.5,348V352M395.5,348V352M416.5,348V352M595.5,348V352M850.5,348V352M949.5,348V352M1372.5,348V352M1588.5,348V352" stroke="#e0223f" stroke-width="1"/></g>
<g clip-path="url(#c3)" class="ce"><polyline points="3,477.5 348,477.5 348,476.5 351,476.5 351,475.5 353,475.5 353,474.5 354,474.5 354,473.5 355,473.5 355,472.5 357,472.5 357,471.5 358,471.5 358,470.5 360,470.5 360,469.5 361,469.5 361,468.5 363,468.5 363,467.5 364,467.5 364,466.5 365,466.5 365,465.5 366,465.5 366,464.5 368,464.5 368,463.5 369,463.5 369,462.5 370,462.5 370,461.5 372,461.5 372,460.5 374,460.5 374,459.5 377,459.5 377,458.5 391,458.5 391,457.5 608,457.5 608,458.5 731,458.5 731,459.5 794,459.5 794,460.5 843,460.5 843,461.5 866,461.5 866,462.5 885,462.5 885,463.5 901,463.5 901,464.5 913,464.5 913,465.5 922,465.5 922,466.5 929,466.5 929,467.5 934,467.5 934,468.5 939,468.5 939,469.5 944,469.5 944,470.5 951,470.5 951,471.5 957,471.5 957,472.5 965,472.5 965,473.5 974,473.5 974,474.5 986,474.5 986,475.5 998,475.5 998,476.5 1036,476.5 1036,477.5 1751,477.5" fill="none" stroke="#7cc022" stroke-width="1.25" />
</g>
<path d="M43,583.5H1751" stroke="#f59a3c" stroke-width="1.25" class="ce"/>
<g stroke="#383838" stroke-width="1" stroke-dasharray="5 5" class="ce"><path d="M593,349.5H1718"/><path d="M43,583.5H1718"/></g>
<g clip-path="url(#c5)" class="ce"><path d="M3,744.5H27V745.5H55.5V654" fill="none" stroke="#2020b4" stroke-width="1"/><path d="M55,654H145.5L146.2,650L146.8,638H151L151.6,648L153,652.5L156,654H1751" fill="none" stroke="#2020b4" stroke-width="2" stroke-linejoin="round"/><path d="M733,655.3h1M878,655.3h1M218,655.3h1M818,655.3h1M1109,655.3h1M146,655.3h1M958,655.3h2M213,655.3h1M255,655.3h2M191,655.3h1M527,655.3h1M1251,655.3h2M171,655.3h1M165,655.3h1M663,655.3h2M365,655.3h1M1239,655.3h2M1217,655.3h1M281,655.3h1M832,655.3h1M1191,655.3h1M1225,655.3h1M1337,655.3h1M1086,655.3h2M1661,655.3h2M1023,655.3h2M810,655.3h2M578,655.3h1M1501,655.3h1M237,655.3h2M1145,655.3h2M773,655.3h2M659,655.3h1M311,655.3h2M407,655.3h2M381,655.3h2M933,655.3h1M1438,655.3h1M1635,655.3h2M766,655.3h2" stroke="#2020b4" stroke-width="0.6"/></g>
<g clip-path="url(#c6)"><polyline points="43,860.5 55.5,860.5 56.5,859 94.5,759" fill="none" stroke="#e8820c" stroke-width="1.3" />
</g>
<g clip-path="url(#c7)"><polyline points="3,979.7 3.25,979.76 3.5,979.63 3.75,979.3 4,979.89 4.25,979.97 4.5,979.02 4.75,979.25 5,978.06 5.25,979.11 5.5,978.9 5.75,979.42 6,979 6.25,977.93 6.5,978.01 6.75,978.41 7,978 7.25,977.13 7.5,977.92 7.75,977.38 8,977.29 8.25,977.18 8.5,978.45 8.75,977.29 9,977.5 9.25,977.75 9.5,978.61 9.75,977.18 10,977.84 10.25,978.01 10.5,978.61 10.75,978.49 11,978.56 11.25,977.5 11.5,977.74 11.75,977.63 12,978.57 12.25,978.7 12.5,977.24 12.75,977.28 13,977.38 13.25,977.37 13.5,977.82 13.75,978 14,977.41 14.25,976.94 14.5,977.68 14.75,977.58 15,977.93 15.25,978.62 15.5,978.14 15.75,977.82 16,978 16.25,978.1 16.5,976.98 16.75,978.49 17,978.27 17.25,978.43 17.5,978.29 17.75,977.56 18,977.56 18.25,977.02 18.5,977.97 18.75,976.94 19,976.94 19.25,977.19 19.5,977.1 19.75,977.41 20,976.89 20.25,976.79 20.5,977.06 20.75,976.96 21,977.43 21.25,976.81 21.5,978.34 21.75,977.86 22,977.02 22.25,977.2 22.5,977.36 22.75,977.39 23,976.95 23.25,978.25 23.5,978.5 23.75,977.55 24,977.57 24.25,976.85 24.5,976.88 24.75,977.3 25,977.16 25.25,978.17 25.5,976.96 25.75,976.7 26,978.37 26.25,977.6 26.5,976.91 26.75,977.62 27,976.68 27.25,977.58 27.5,978.38 27.75,978.17 28,977.86 28.25,977.07 28.5,977.26 28.75,976.89 29,977.98 29.25,977.54 29.5,977.98 29.75,977.16 30,976.96 30.25,978.02 30.5,978.32 30.75,978.08 31,977.99 31.25,978.01 31.5,977.86 31.75,976.93 32,977.45 32.25,977.15 32.5,976.56 32.75,976.55 33,977 33.25,976.95 33.5,977.73 33.75,978.2 34,977.28 34.25,978.15 34.5,978.24 34.75,978.17 35,977.1 35.25,976.84 35.5,976.84 35.75,976.78 36,976.79 36.25,977.54 36.5,978.03 36.75,977.92 37,977.3 37.25,977.27 37.5,977.58 37.75,977.85 38,976.57 38.25,977.61 38.5,978.06 38.75,977.84 39,977.78 39.25,977.3 39.5,976.76 39.75,977.86 40,977.04 40.25,977.89 40.5,978.2 40.75,977.17 41,977.18 41.25,978.17 41.5,977.77 41.75,976.78 42,976.71 42.25,976.75 42.5,978.11 42.75,977.94 43,976.76 43.25,977.98 43.5,978.26 43.75,977.69 44,977.14 44.25,977.5 44.5,976.75 44.75,976.54 45,978.27 45.25,977.7 45.5,977.48 45.75,978.22 46,977.32 46.25,978.11 46.5,978.03 46.75,976.93 47,977.01 47.25,977.09 47.5,976.99 47.75,977.62 48,977.04 48.25,977.33 48.5,976.81 48.75,978.22 49,977.22 49.25,977.41 49.5,977.64 49.75,978.22 50,977.5 50.25,977.33 50.5,978.2 50.75,977.43 51,977.46 51.25,977.42 51.5,976.48 51.75,977.22 52,976.73 52.25,976.38 52.5,977.79 52.75,976.64 53,977.15 53.25,977.58 53.5,977.25 53.75,976.81 54,977.13 54.25,977.17 54.5,977.56 54.75,976.32 55,977 55.25,976.48 55.5,975.3 55.75,974.72 55.8,975 56,959.89 56.25,939.91 56.3,936 56.5,959.71 56.75,989.57 56.8,995 57,988.03 57.25,977.54 57.5,968 57.75,977.85 58,987.3 58.2,995 58.25,993.46 58.5,985.97 58.75,977.73 59,970 59.25,978.39 59.5,986.63 59.6,990 59.75,986.94 60,980.07 60.25,973.96 60.3,972 60.5,973.21 60.75,972.49 61,973.55 61.25,974.75 61.5,975.08 61.75,974.33 62,975.5 62.25,974.94 62.5,975.65 62.75,975.11 63,975.53 63.25,975.36 63.5,976.56 63.75,976.89 64,977.21 64.25,976 64.5,977.14 64.75,977.16 65,976.36 65.25,977.81 65.5,978.09 65.75,976.87 66,977.5 66.25,978.35 66.5,977.38 66.75,977.57 67,978.51 67.25,978.25 67.5,977.08 67.75,977.6 68,977.78 68.25,977.49 68.5,977.26 68.75,977.52 69,978.27 69.25,977.04 69.5,978.03 69.75,977.86 70,978 70.25,977.01 70.5,977.45 70.75,977.85 71,977.52 71.25,976.59 71.5,978.12 71.75,977.64 72,977.85 72.25,976.16 72.5,976.33 72.75,975.8 73,977 73.25,975.96 73.5,975.58 73.75,975.99 74,976 74.25,976.54 74.5,976.17 74.75,974.97 75,974.57 75.25,975.75 75.5,974.93 75.75,974.96 76,973.66 76.25,973.4 76.5,974.34 76.75,973.67 77,972.83 77.25,974.19 77.5,973.44 77.75,973.54 78,972.8 78.25,972.09 78.5,973.53 78.75,972.15 79,973.62 79.25,972.93 79.5,972.77 79.75,973.2 80,973.91 80.25,972.77 80.5,972.56 80.75,973.32 81,972.84 81.25,972.65 81.5,972.79 81.75,972.63 82,972.95 82.25,973.19 82.5,973.22 82.75,974.08 83,973.28 83.25,973.7 83.5,973.16 83.75,973.51 84,972.96 84.25,973.42 84.5,973.04 84.75,974.38 85,974 85.25,974.08 85.5,973.42 85.75,973.93 86,974.75 86.25,973.25 86.5,974.52 86.75,973.82 87,973.92 87.25,974.53 87.5,973.72 87.75,973.92 88,974.24 88.25,974.76 88.5,973.6 88.75,974.47 89,974.24 89.25,974.1 89.5,973.68 89.75,973.57 90,973.03 90.25,973.16 90.5,973.04 90.75,974.24 91,973.36 91.25,973.19 91.5,973.04 91.75,974.39 92,974.43 92.25,974.07 92.5,973.36 92.75,973.28 93,973.36 93.25,973.65 93.5,973.1 93.75,973.61 94,973.27 94.25,974.52 94.5,974.53 94.75,973.76 95,973.21 95.25,974.5 95.5,973.31 95.75,973.38 96,972.74 96.25,973.41 96.5,973.57 96.75,973.61 97,973.06 97.25,973.6 97.5,972.69 97.75,973.15 98,972.83 98.25,973.38 98.5,972.73 98.75,972.68 99,973.18 99.25,973.04 99.5,973.67 99.75,973.56 100,973.5 100.25,973.94 100.5,973.76 100.75,973.85 101,974.13 101.25,973.24 101.5,973.11 101.75,974.29 102,972.77 102.25,973.79 102.5,973.63 102.75,972.54 103,973.95 103.25,974.04 103.5,973.55 103.75,973.73 104,973.86 104.25,972.64 104.5,973.32 104.75,973.27 105,973.85 105.25,973.79 105.5,973.81 105.75,973.36 106,973.91 106.25,973.52 106.5,973.52 106.75,972.68 107,972.31 107.25,972.48 107.5,972.87 107.75,972.4 108,973.7 108.25,973.19 108.5,973.3 108.75,973.29 109,973.38 109.25,973.02 109.5,972.13 109.75,973.55 110,973.45 110.25,972.99 110.5,973.04 110.75,973.25 111,972.17 111.25,973.36 111.5,972.48 111.75,972.15 112,972.48 112.25,973.3 112.5,972.34 112.75,973.29 113,973.71 113.25,972.83 113.5,972.61 113.75,972.77 114,973.13 114.25,973.27 114.5,972.99 114.75,973.02 115,971.99 115.25,972.1 115.5,972.28 115.75,973.15 116,972.35 116.25,972.81 116.5,971.8 116.75,971.87 117,972.23 117.25,972.95 117.5,972.97 117.75,972.93 118,972.22 118.25,972.62 118.5,972.51 118.75,972.5 119,971.86 119.25,973.25 119.5,971.98 119.75,973.37 120,972.5 120.25,973.27 120.5,971.6 120.75,972.38 121,973.02 121.25,973.27 121.5,972.32 121.75,971.98 122,971.86 122.25,973.17 122.5,971.84 122.75,972.49 123,971.69 123.25,972.36 123.5,973.12 123.75,971.63 124,972.85 124.25,972.28 124.5,972.94 124.75,972.6 125,971.73 125.25,972.92 125.5,972.16 125.75,971.32 126,971.27 126.25,972.13 126.5,972.04 126.75,971.76 127,971.46 127.25,971.81 127.5,971.75 127.75,972.67 128,971.15 128.25,972.49 128.5,972.63 128.75,971.32 129,972.76 129.25,972.36 129.5,972.69 129.75,971.57 130,971.7 130.25,971.73 130.5,972.8 130.75,972.05 131,971.63 131.25,971.73 131.5,971.45 131.75,971.02 132,971.1 132.25,972.41 132.5,971.41 132.75,972.56 133,971.31 133.25,971.33 133.5,971.76 133.75,971.16 134,971.48 134.25,972.52 134.5,972.37 134.75,972.23 135,971.89 135.25,972.38 135.5,972.42 135.75,971.7 136,971.99 136.25,970.77 136.5,971.99 136.75,971.46 137,971.99 137.25,971.79 137.5,971.13 137.75,970.68 138,972.25 138.25,970.8 138.5,971.4 138.75,971.16 139,971.06 139.25,971.84 139.5,972.26 139.75,970.95 140,971.65 140.25,971 140.5,971.44 140.75,971.14 141,970.71 141.25,970.69 141.5,970.76 141.75,972 142,971.25 142.25,970.74 142.5,971.96 142.75,972.11 143,971.2 143.25,971.06 143.5,970.45 143.75,970.5 144,971 144.25,953.76 144.5,938 144.75,967.72 145,998 145.25,997.26 145.5,997.53 145.75,997.57 146,998.13 146.25,998.7 146.5,998.45 146.75,997.84 147,997.84 147.25,998.04 147.5,997.78 147.75,997.71 148,997.21 148.25,997.6 148.5,998.84 148.75,997.33 149,998.01 149.25,998.23 149.5,998 149.75,987.65 150,976 150.25,984.66 150.5,993.92 150.6,998 150.75,997.55 151,997.82 151.25,997.9 151.5,998.82 151.75,998.63 152,998.67 152.25,997.14 152.5,997.16 152.75,998.38 153,998.71 153.25,997.95 153.5,998.16 153.75,997.1 154,997.8 154.25,998.77 154.5,998.59 154.75,998.64 155,998 155.25,981.75 155.5,963.8 155.75,980.45 156,998 156.25,997.3 156.5,997.38 156.75,998.04 157,998.33 157.25,998.79 157.5,998.4 157.75,998.27 158,998.48 158.25,997.92 158.5,998.09 158.75,997.17 159,998.51 159.25,997.52 159.5,998 159.75,989.61 160,979.7 160.25,987.59 160.5,994.6 160.6,998 160.75,997.33 161,997.55 161.25,998.25 161.5,998.36 161.75,997.3 162,997.23 162.25,998.04 162.5,998.15 162.75,997.8 163,997.5 163.25,998.18 163.5,998 163.75,988.12 164,980 164.25,987.14 164.5,994.93 164.6,998 164.75,998.83 165,998.26 165.25,998.69 165.5,997.96 165.75,997.52 166,997.54 166.25,998.83 166.5,998.37 166.75,997.65 167,997.14 167.25,998 167.5,998.31 167.75,997.86 168,998 168.25,996.65 168.5,996.48 168.75,996.03 169,993.86 169.25,992.6 169.5,992.23 169.75,991.47 170,991.03 170.25,989.24 170.5,989.41 170.75,988.39 171,987.06 171.25,985.61 171.5,986.07 171.75,983.97 172,983.4 172.25,983.96 172.5,982.89 172.75,982.86 173,983.82 173.25,982.97 173.5,984.14 173.75,983.3 174,982.74 174.25,982.79 174.5,983.13 174.75,983.56 175,984.06 175.25,982.6 175.5,983.03 175.75,982.7 176,984.05 176.25,982.54 176.5,982.37 176.75,982.37 177,982.96 177.25,983.85 177.5,983.82 177.75,983.53 178,984 178.25,983.86 178.5,982.77 178.75,982.5 179,983.83 179.25,983.48 179.5,982.18 179.75,983.31 180,983 180.25,982.7 180.5,982.6 180.75,982.44 181,982.06 181.25,981.68 181.5,982.09 181.75,982.13 182,983.13 182.25,981.55 182.5,982.98 182.75,981.53 183,981.71 183.25,982.46 183.5,982.38 183.75,981.59 184,980.82 184.25,981.5 184.5,981.23 184.75,982.13 185,980.73 185.25,980.96 185.5,981.83 185.75,980.18 186,980.78 186.25,981.42 186.5,981.25 186.75,979.86 187,980.6 187.25,979.62 187.5,979.53 187.75,980.92 188,979.59 188.25,980.33 188.5,980.45 188.75,979.3 189,979.04 189.25,980.13 189.5,979.37 189.75,978.59 190,979.26 190.25,978.4 190.5,978.18 190.75,977.55 191,978.76 191.25,978.91 191.5,978.25 191.75,978.67 192,976.87 192.25,977.1 192.5,977.39 192.75,978.12 193,977.97 193.25,976.8 193.5,976.41 193.75,976.59 194,976.56 194.25,977.2 194.5,975.72 194.75,976.69 195,976 195.25,976.32 195.5,976.36 195.75,976.16 196,975.76 196.25,975.14 196.5,975.02 196.75,974.99 197,975.64 197.25,974.26 197.5,974.36 197.75,975.26 198,974.24 198.25,973.8 198.5,973.63 198.75,974.46 199,973.94 199.25,975.01 199.5,974.73 199.75,974.81 200,973.39 200.25,972.96 200.5,972.87 200.75,973.49 201,973.76 201.25,973.18 201.5,972.69 201.75,972.9 202,973.16 202.25,973.15 202.5,973.17 202.75,973.24 203,972.81 203.25,971.72 203.5,972.9 203.75,971.81 204,972.19 204.25,971.73 204.5,972.28 204.75,971.2 205,971.18 205.25,971.07 205.5,970.79 205.75,972 206,971.2 206.25,971.25 206.5,970.71 206.75,970.75 207,971.74 207.25,970.78 207.5,970.19 207.75,971.14 208,970.78 208.25,971.3 208.5,969.61 208.75,970.19 209,970.72 209.25,970.68 209.5,970.72 209.75,969.06 210,969.43 210.25,969.03 210.5,969.07 210.75,970.39 211,969.6 211.25,970.14 211.5,969.05 211.75,969.85 212,969.01 212.25,968.58 212.5,969.42 212.75,969.64 213,968.04 213.25,968.84 213.5,968.79 213.75,967.98 214,968.16 214.25,967.67 214.5,967.69 214.75,967.7 215,968.23 215.25,968.24 215.5,967.34 215.75,966.91 216,967.39 216.25,967.93 216.5,966.96 216.75,967.1 217,966.82 217.25,967.79 217.5,967.26 217.75,966.3 218,967 218.25,966.22 218.5,966.68 218.75,966.89 219,966.98 219.25,965.93 219.5,965.99 219.75,966.89 220,966.3 220.25,966.01 220.5,965.99 220.75,967.08 221,965.86 221.25,966.25 221.5,965.81 221.75,965.85 222,966.59 222.25,966.76 222.5,965.55 222.75,965.19 223,966.08 223.25,965.07 223.5,964.64 223.75,966.19 224,965.26 224.25,965.91 224.5,965.1 224.75,965.89 225,965.06 225.25,964.46 225.5,964.13 225.75,965.03 226,965.12 226.25,965.54 226.5,963.99 226.75,964.89 227,964.37 227.25,964.54 227.5,963.83 227.75,964.01 228,964.37 228.25,965.03 228.5,963.5 228.75,964.12 229,964.62 229.25,964.84 229.5,963.39 229.75,963.19 230,963.8 230.25,964.55 230.5,964.56 230.75,963.63 231,962.81 231.25,964.33 231.5,963.32 231.75,964.2 232,963.64 232.25,963.96 232.5,962.72 232.75,963.8 233,962.74 233.25,963.02 233.5,963.77 233.75,963.69 234,962.48 234.25,962.5 234.5,962.78 234.75,962.95 235,962.66 235.25,962.14 235.5,962.32 235.75,963.13 236,963.4 236.25,961.81 236.5,962.7 236.75,963 237,961.66 237.25,963.06 237.5,961.71 237.75,962.53 238,962.4 238.25,962.49 238.5,961.86 238.75,962.02 239,962.27 239.25,961.94 239.5,962.31 239.75,961.88 240,961.82 240.25,961.03 240.5,962.05 240.75,961.77 241,961.27 241.25,962.17 241.5,962.16 241.75,961.53 242,960.98 242.25,961.47 242.5,960.76 242.75,960.75 243,961.25 243.25,960.59 243.5,961.18 243.75,961.25 244,960.36 244.25,961.39 244.5,960.34 244.75,961.47 245,961 245.25,961.46 245.5,960.94 245.75,960.08 246,960.85 246.25,960.59 246.5,961.58 246.75,960.08 247,961.34 247.25,961.55 247.5,961.03 247.75,961.14 248,959.99 248.25,961.37 248.5,960.45 248.75,961.25 249,961.13 249.25,959.74 249.5,960.83 249.75,961.04 250,959.45 250.25,959.92 250.5,960.61 250.75,959.5 251,960.79 251.25,959.63 251.5,960.57 251.75,959.32 252,959.93 252.25,960.64 252.5,959.32 252.75,959.38 253,959.78 253.25,959.41 253.5,958.86 253.75,959.08 254,959.01 254.25,960.36 254.5,959.86 254.75,960.21 255,958.87 255.25,959.94 255.5,958.69 255.75,959.4 256,959.55 256.25,959.02 256.5,959.9 256.75,959.29 257,959.3 257.25,959.8 257.5,958.37 257.75,959.93 258,959 258.25,959.21 258.5,958.76 258.75,959.46 259,958.48 259.25,959.76 259.5,958.99 259.75,958.57 260,959.28 260.25,958.67 260.5,958.17 260.75,959.16 261,957.89 261.25,959.25 261.5,958.21 261.75,958.88 262,959.47 262.25,958.73 262.5,958.84 262.75,958.19 263,957.6 263.25,957.64 263.5,957.82 263.75,958.63 264,958.28 264.25,958.4 264.5,959.06 264.75,957.66 265,957.81 265.25,958.55 265.5,957.39 265.75,957.33 266,957.94 266.25,957.47 266.5,957.89 266.75,957.63 267,958.25 267.25,958.24 267.5,957.52 267.75,958.25 268,957.95 268.25,957.32 268.5,958.74 268.75,957.46 269,957.27 269.25,957.15 269.5,958.1 269.75,958.49 270,957.8 270.25,958.29 270.5,957.59 270.75,957.32 271,956.85 271.25,957.97 271.5,957.81 271.75,957.41 272,957.92 272.25,957.54 272.5,958.41 272.75,958.03 273,957.14 273.25,958.3 273.5,956.73 273.75,957.59 274,957.35 274.25,957.03 274.5,956.69 274.75,957.97 275,956.57 275.25,957.52 275.5,958.21 275.75,956.75 276,956.84 276.25,957.55 276.5,957.35 276.75,957.58 277,957.87 277.25,956.7 277.5,956.93 277.75,956.89 278,956.42 278.25,957.92 278.5,957.2 278.75,962.66 279,967.49 279.25,971.16 279.5,977 279.75,980.87 280,983.94 280.25,986.69 280.5,990 280.75,990.34 281,989.71 281.25,989.21 281.5,988.89 281.75,989.02 282,988.57 282.25,989 282.5,989.65 282.75,989.45 283,989 283.25,989.47 283.5,989.08 283.75,988.13 284,988.5 284.25,988.13 284.5,988.62 284.75,987.99 285,987.38 285.25,987.91 285.5,988.34 285.75,986.84 286,987.88 286.25,986.18 286.5,986.47 286.75,986.27 287,986.6 287.25,985.39 287.5,984.09 287.75,982.08 288,979.67 288.25,979.02 288.3,978 288.5,947.02 288.6,932 288.75,948.03 289,976 289.25,976.23 289.5,975.24 289.75,974.85 290,974 290.25,974.27 290.5,974.8 290.75,973.86 291,974.49 291.25,974.21 291.5,974.46 291.75,973.68 292,974.16 292.25,973.86 292.5,973.35 292.75,973.15 293,973.86 293.25,972.85 293.5,974.32 293.75,972.91 294,972.67 294.25,972.78 294.5,974.23 294.75,973.15 295,972.76 295.25,972.52 295.5,972.51 295.75,973.66 296,973.52 296.25,973.6 296.5,973.65 296.75,972.41 297,973.32 297.25,972.88 297.5,973.67 297.75,973.65 298,973.74 298.25,972.23 298.5,973.64 298.75,973.7 299,973.72 299.25,972.18 299.5,972.33 299.75,972.13 300,971.96 300.25,973.4 300.5,973.3 300.75,972.95 301,973.27 301.25,972.89 301.5,972.24 301.75,971.87 302,971.84 302.25,972.99 302.5,971.97 302.75,972.14 303,972.3 303.25,971.55 303.5,971.94 303.75,971.96 304,972.71 304.25,972.05 304.5,971.94 304.75,973.07 305,972.2 305.25,972.27 305.5,972.97 305.75,972.61 306,971.62 306.25,972.38 306.5,972.49 306.75,973.16 307,972.46 307.25,973.17 307.5,972.93 307.75,972.42 308,973 308.25,961.44 308.5,947.85 308.6,943.7 308.75,944.5 309,943.71 309.25,943.78 309.5,944.51 309.75,945.9 310,946.66 310.25,945.28 310.5,946.53 310.75,946.91 311,947.83 311.25,947.11 311.5,948.04 311.75,948.15 312,948.8 312.25,949.63 312.5,948.83 312.75,950.29 313,949.34 313.25,949.44 313.5,950.55 313.75,950.42 314,949.95 314.25,951.13 314.5,950.36 314.75,951.86 315,951.93 315.25,952.32 315.5,952.27 315.75,952.01 316,952.5 316.25,952.53 316.5,952.74 316.75,953.84 317,952.61 317.25,954.26 317.5,952.92 317.75,953.46 318,953.77 318.25,955.13 318.5,954.63 318.75,954.62 319,955.74 319.25,954.78 319.5,955.4 319.75,955.74 320,955.9 320.25,956.4 320.5,956.45 320.75,956.3 321,955.81 321.25,955.82 321.5,955.55 321.75,956.84 322,956.56 322.2,956.3 322.25,951.95 322.5,926.98 322.6,918 322.75,917.32 323,916.98 323.25,915.69 323.5,914.6 323.75,914.07 324,914.81 324.25,915.71 324.5,914.69 324.75,914.74 325,915.08 325.25,915.95 325.5,916.34 325.75,915.24 326,916 326.25,915.58 326.5,915.95 326.75,916.29 327,916.84 327.25,916.39 327.5,916.89 327.75,916.84 328,918.46 328.25,918.21 328.5,917.28 328.75,919.03 329,918.4 329.25,939.62 329.4,953.5 329.5,953.29 329.75,954.37 329.9,953.5 330,949.33 330.25,937.47 330.4,930 330.5,929.86 330.75,929.36 331,930.09 331.25,929.07 331.5,929.18 331.75,929.44 332,928.74 332.25,929.33 332.5,929.97 332.75,929.73 333,929.32 333.25,929.49 333.5,929.12 333.75,928.47 334,929.24 334.25,928.82 334.5,929.35 334.75,929.59 335,928.66 335.25,928.86 335.5,929.11 335.75,928.45 336,928.04 336.25,928.86 336.5,929.08 336.75,928.82 337,928.62 337.25,928.83 337.5,928.45 337.75,928.32 338,928 338.25,927.62 338.5,927.06 338.75,927.33 339,926.08 339.25,926.36 339.5,926.71 339.75,926.28 340,925.83 340.25,924.85 340.5,924.86 340.75,924.62 341,924.4 341.25,924 341.5,923 341.75,922.87 342,922.71 342.25,920.75 342.5,920.98 342.75,920.58 343,919.27 343.25,918.83 343.5,919.09 343.75,916.79 344,917 344.25,915.89 344.5,914.01 344.75,913.94 345,913.04 345.25,911.1 345.5,909.16 345.75,908.82 346,907.5 346.25,906.39 346.5,905.52 346.75,903.96 347,903 347.25,902.15 347.5,900.41 347.75,899.03 348,898 348.25,897.27 348.5,894.41 348.75,893.73 349,891.67 349.25,890.81 349.5,888.8 349.75,886.82 350,887.07 350.25,884.64 350.5,882.8 350.75,881.89 351,880.82 351.25,878.82 351.5,878.4 351.75,876.85 352,875.46 352.25,874.56 352.5,872.53 352.75,870.98 353,870" fill="none" stroke="#5a1878" stroke-width="1.3" />
<polyline points="917,866 917.5,867.9 918,871.22 918.5,873.97 919,875.61 919.3,877 919.5,877.55 920,881.25 920.5,883.16 921,886 921.5,887.98 922,890.33 922.5,894 923,896 923.5,897.88 924,898.89 924.5,899.92 925,901.41 925.5,902.13 926,904.78 926.5,905.01 927,906.6 927.5,908.08 928,909.64 928.5,910.87 929,911.48 929.5,912.4 930,914 930.5,915.39 931,915.93 931.5,918.5 932,918.94 932.5,921.13 933,921.38 933.5,922.88 934,923.96 934.5,925.57 935,927 935.5,927.48 936,928.2 936.5,930.55 937,930.81 937.5,931.79 938,932.94 938.5,934.31 939,935.27 939.5,936.7 940,937.5 940.5,938.54 941,938.75 941.5,940.52 942,941.14 942.5,940.45 943,942.59 943.5,943.48 944,944.01 944.5,943.6 945,945 945.5,946.16 946,946.36 946.5,945.81 947,946.36 947.5,948.61 948,948.64 948.5,948.47 949,948.76 949.5,949.4 950,950.6 950.5,950.57 951,952 951.5,951.67 952,951.77 952.5,953.58 953,953.83 953.5,953.15 954,954.9 954.5,954.85 955,955.61 955.5,955.85 956,956 956.5,956.96 957,957.02 957.5,957.36 958,956.46 958.5,957.6 959,957.56 959.5,958.19 960,957.89 960.5,958.94 961,958.6 961.5,958.33 962,959 962.5,958.71 963,958.73 963.5,959.55 964,958.96 964.5,959.88 965,959.48 965.5,960.3 966,960.5 966.5,960.76 967,961.53 967.5,960.17 968,961.86 968.5,961.38 969,961.74 969.5,962.11 970,962 970.5,962.74 971,962.02 971.5,962.23 972,963.33 972.5,961.86 973,963 973.5,963.12 974,962.15 974.5,963.32 975,963.58 975.5,964.15 976,963.19 976.5,964.49 977,963.77 977.5,963.85 978,964 978.5,964.8 979,963.33 979.5,964.64 980,964.56 980.5,964.13 981,965.15 981.5,964.34 982,964.62 982.5,964.8 983,965.32 983.5,964.4 984,964.88 984.5,964.94 985,965.26 985.5,965.84 986,964.96 986.5,966.01 987,965.33 987.5,965.59 988,965.26 988.5,965.76 989,966.69 989.5,966.19 990,966 990.5,966.58 991,965.8 991.5,965.82 992,965.84 992.5,966.41 993,966.54 993.5,966.86 994,965.57 994.5,966.85 995,967.19 995.5,966.63 996,965.79 996.5,966.29 997,965.81 997.5,966.19 998,967.56 998.5,967.05 999,967.18 999.5,967.47 1000,967 1000.5,967.75 1001,967.22 1001.5,967.24 1002,967.27 1002.5,967.4 1003,967.23 1003.5,967.4 1004,966.56 1004.5,967.39 1005,967.02 1005.5,967.58 1006,966.4 1006.5,966.56 1007,966.31 1007.5,967.64 1008,967.91 1008.5,967.45 1009,966.94 1009.5,967.77 1010,967.72 1010.5,967.32 1011,966.78 1011.5,966.87 1012,967.1 1012.5,966.92 1013,967.14 1013.5,967.53 1014,968.06 1014.5,966.49 1015,967.3 1015.5,967.41 1016,966.45 1016.5,966.58 1017,967.81 1017.5,967.37 1018,967.98 1018.5,967.12 1019,966.33 1019.5,966.98 1020,967.34 1020.5,967.95 1021,968.02 1021.5,967.09 1022,966.97 1022.5,966.4 1023,967.36 1023.5,966.57 1024,966.45 1024.5,966.19 1025,966.16 1025.5,967.37 1026,966.34 1026.5,967.85 1027,966.26 1027.5,967.65 1028,966.31 1028.5,966.09 1029,967.34 1029.5,966.47 1030,967.35 1030.5,966.35 1031,966.09 1031.5,967.38 1032,967.26 1032.5,967.5 1033,967.26 1033.5,966.09 1034,967.06 1034.5,967.19 1035,966.8 1035.5,966.71 1036,967.54 1036.5,966.3 1037,967.56 1037.5,967.09 1038,965.8 1038.5,965.79 1039,966.91 1039.5,967.19 1040,965.84 1040.5,966.24 1041,966.97 1041.5,965.94 1042,967.17 1042.5,966.48 1043,965.69 1043.5,966.22 1044,966.57 1044.5,966.31 1045,966.72 1045.5,965.74 1046,966.9 1046.5,966.09 1047,966.58 1047.5,966.53 1048,966.13 1048.5,966.05 1049,966.76 1049.5,967.02 1050,966.71 1050.5,966.3 1051,965.79 1051.5,965.35 1052,966.97 1052.5,966.47 1053,966.67 1053.5,965.76 1054,966.23 1054.5,966.88 1055,966.6 1055.5,966.16 1056,965.62 1056.5,965.81 1057,966.62 1057.5,965.68 1058,966.21 1058.5,966.04 1059,966.55 1059.5,966.37 1060,965.8 1060.5,965.37 1061,964.83 1061.5,965.26 1062,965.51 1062.5,965.77 1063,966.14 1063.5,966.23 1064,964.68 1064.5,966.06 1065,965.99 1065.5,966.05 1066,965.48 1066.5,964.91 1067,965.91 1067.5,965.79 1068,965.53 1068.5,965.91 1069,964.85 1069.5,964.34 1070,965.15 1070.5,965.55 1071,964.44 1071.5,965.39 1072,965.68 1072.5,964.38 1073,965.02 1073.5,965.11 1074,964.69 1074.5,964.18 1075,964.23 1075.5,965.09 1076,965.12 1076.5,964.49 1077,963.78 1077.5,965.04 1078,964.94 1078.5,963.93 1079,964.52 1079.5,965.05 1080,964.3 1080.5,964.96 1081,964.28 1081.5,964.17 1082,964.34 1082.5,963.59 1083,963.57 1083.5,963.52 1084,964.42 1084.5,963.78 1085,964.12 1085.5,963.79 1086,963.97 1086.5,963.28 1087,963.06 1087.5,964.74 1088,963.59 1088.5,963.08 1089,964 1089.5,964.25 1090,963.08 1090.5,963.84 1091,963.36 1091.5,963.65 1092,962.72 1092.5,962.71 1093,964.4 1093.5,964.15 1094,963.44 1094.5,963.55 1095,962.97 1095.5,963.87 1096,963.21 1096.5,964.11 1097,963.76 1097.5,963.82 1098,964.05 1098.5,962.75 1099,962.33 1099.5,962.59 1100,962.53 1100.5,962.32 1101,962.23 1101.5,963.11 1102,963.65 1102.5,962.87 1103,963.72 1103.5,963.63 1104,962.08 1104.5,963.01 1105,962.8 1105.5,962.58 1106,962.05 1106.5,963.52 1107,962.23 1107.5,962.75 1108,962.85 1108.5,963.38 1109,962.83 1109.5,962.3 1110,962.37 1110.5,961.81 1111,963.23 1111.5,963.24 1112,961.82 1112.5,961.46 1113,961.82 1113.5,961.96 1114,962.91 1114.5,962.88 1115,962.73 1115.5,961.27 1116,962.57 1116.5,962.4 1117,962.25 1117.5,962.82 1118,961.12 1118.5,961.24 1119,962.31 1119.5,962.6 1120,962.1 1120.5,961.38 1121,961.88 1121.5,962.14 1122,960.93 1122.5,961.29 1123,961.14 1123.5,960.87 1124,961.47 1124.5,960.88 1125,960.97 1125.5,960.76 1126,961.69 1126.5,960.46 1127,961.7 1127.5,960.72 1128,960.4 1128.5,961.97 1129,960.66 1129.5,961.92 1130,961.1 1130.5,961.7 1131,961.67 1131.5,960.26 1132,960.75 1132.5,960.05 1133,961.48 1133.5,961.26 1134,960.81 1134.5,960.43 1135,960.16 1135.5,960.97 1136,960.28 1136.5,960.49 1137,959.55 1137.5,959.62 1138,959.26 1138.5,960.38 1139,960.03 1139.5,959.23 1140,960.47 1140.5,959.31 1141,959.51 1141.5,958.99 1142,959.13 1142.5,960.09 1143,959.11 1143.5,958.75 1144,959.26 1144.5,958.89 1145,959.88 1145.5,958.39 1146,959.88 1146.5,958.16 1147,959.6 1147.5,959.13 1148,958.24 1148.5,958.65 1149,958.25 1149.5,958.13 1150,958.5 1150.5,957.92 1151,958.16 1151.5,959.24 1152,959.21 1152.5,959.03 1153,957.49 1153.5,957.79 1154,958.83 1154.5,957.28 1155,958.43 1155.5,957.61 1156,958.79 1156.5,957.01 1157,958.39 1157.5,957.5 1158,957.09 1158.5,956.8 1159,958.24 1159.5,957.65 1160,956.98 1160.5,957.39 1161,958.2 1161.5,956.9 1162,957.49 1162.5,956.66 1163,956.69 1163.5,957.7 1164,957.55 1164.5,956.58 1165,956.32 1165.5,956.28 1166,957.18 1166.5,956.92 1167,956.48 1167.5,956.31 1168,956.99 1168.5,957.12 1169,957.26 1169.5,956.8 1170,956.6 1170.5,956.02 1171,955.72 1171.5,956.88 1172,956.25 1172.5,956.77 1173,955.52 1173.5,956.83 1174,955.93 1174.5,956.8 1175,956.79 1175.5,956.07 1176,955.17 1176.5,956.73 1177,955.9 1177.5,956.57 1178,955.43 1178.5,955.24 1179,956.36 1179.5,955.47 1180,955.06 1180.5,955.39 1181,955.74 1181.5,954.64 1182,955.52 1182.5,955.34 1183,955.41 1183.5,954.66 1184,955.68 1184.5,955.82 1185,955.86 1185.5,954.83 1186,955.49 1186.5,954.85 1187,955.47 1187.5,954.18 1188,955.59 1188.5,955.69 1189,954.82 1189.5,954.8 1190,954.79 1190.5,954.75 1191,953.78 1191.5,955.43 1192,954.05 1192.5,953.93 1193,953.74 1193.5,953.96 1194,954.93 1194.5,953.47 1195,953.54 1195.5,954.58 1196,953.62 1196.5,953.26 1197,954.26 1197.5,954.17 1198,954.03 1198.5,954.3 1199,953.18 1199.5,954.51 1200,953.8 1200.5,954.14 1201,952.87 1201.5,952.96 1202,953.57 1202.5,953.53 1203,953.07 1203.5,952.73 1204,953.19 1204.5,952.65 1205,953.42 1205.5,953.84 1206,952.5 1206.5,953.22 1207,953.47 1207.5,952.37 1208,953.51 1208.5,953.65 1209,952.61 1209.5,952.61 1210,953.31 1210.5,952.69 1211,952.4 1211.5,953.33 1212,952.98 1212.5,952.13 1213,951.9 1213.5,952.02 1214,952.14 1214.5,953.07 1215,952.7 1215.5,952.84 1216,952.61 1216.5,952.61 1217,951.13 1217.5,951.91 1218,952.64 1218.5,952.55 1219,951.26 1219.5,951.51 1220,951.6 1220.5,951.8 1221,951.29 1221.5,951.55 1222,950.68 1222.5,951.3 1223,951.4 1223.5,950.49 1224,950.67 1224.5,952.13 1225,951.75 1225.5,952 1226,951.42 1226.5,951.7 1227,951.8 1227.5,951.77 1228,950.2 1228.5,951.26 1229,950.55 1229.5,951.26 1230,950.49 1230.5,950.94 1231,951.59 1231.5,951.01 1232,950.31 1232.5,950.76 1233,950.57 1233.5,951.47 1234,950.24 1234.5,950.23 1235,950.82 1235.5,949.83 1236,950.65 1236.5,951.27 1237,950.43 1237.5,949.96 1238,950.28 1238.5,950.37 1239,949.64 1239.5,949.56 1240,950.2 1240.5,949.48 1241,949.71 1241.5,949.85 1242,949.58 1242.5,949.44 1243,949.1 1243.5,949.86 1244,950.33 1244.5,949.86 1245,949.73 1245.5,949.81 1246,948.94 1246.5,949.8 1247,949.29 1247.5,949.39 1248,949.44 1248.5,949.12 1249,948.78 1249.5,948.6 1250,948.5 1250.5,948.96 1251,948.67 1251.5,948.97 1252,947.88 1252.5,948.43 1253,949.29 1253.5,948.11 1254,948.62 1254.5,948.44 1255,948.01 1255.5,949.22 1256,947.91 1256.5,948.71 1257,947.55 1257.5,947.32 1258,948.71 1258.5,947.87 1259,947.13 1259.5,947.66 1260,947.8 1260.5,947.64 1261,948.11 1261.5,946.93 1262,947.09 1262.5,948.35 1263,947.9 1263.5,946.79 1264,947.07 1264.5,947.04 1265,947.57 1265.5,947.4 1266,947.77 1266.5,947.66 1267,947.06 1267.5,947.4 1268,947.36 1268.5,947.33 1269,946.77 1269.5,947.27 1270,947.08 1270.5,947.39 1271,945.92 1271.5,947.2 1272,945.59 1272.5,946.9 1273,946.52 1273.5,946.31 1274,947.09 1274.5,946.33 1275,946 1275.5,946.61 1276,946.71 1276.5,946.18 1277,945.71 1277.5,945.79 1278,945.74 1278.5,946.17 1279,945.34 1279.5,945.46 1280,945.6 1280.5,945.63 1281,945.25 1281.5,945.07 1282,945.84 1282.5,945.88 1283,945.18 1283.5,945.01 1284,944.47 1284.5,944.62 1285,944.26 1285.5,944.97 1286,944.91 1286.5,943.95 1287,945.38 1287.5,944.23 1288,945.1 1288.5,945.02 1289,945.17 1289.5,943.74 1290,944.07 1290.5,944.87 1291,943.18 1291.5,943.18 1292,944.04 1292.5,943.85 1293,944.54 1293.5,944.2 1294,943.71 1294.5,944.47 1295,943.53 1295.5,943.46 1296,943.69 1296.5,943.09 1297,942.96 1297.5,943.32 1298,942.81 1298.5,943.82 1299,943.26 1299.5,942.92 1300,942.8 1300.5,942.03 1301,942.48 1301.5,942.48 1302,942.72 1302.5,942.7 1303,943.2 1303.5,943.3 1304,942.4 1304.5,942.26 1305,942.55 1305.5,943.17 1306,941.95 1306.5,942.24 1307,942.7 1307.5,941.49 1308,941.71 1308.5,942.85 1309,942.53 1309.5,941.92 1310,941.15 1310.5,942.51 1311,942.1 1311.5,942.28 1312,942.54 1312.5,942.31 1313,941.42 1313.5,940.9 1314,941.09 1314.5,941.44 1315,941.38 1315.5,940.77 1316,940.71 1316.5,941.47 1317,941.37 1317.5,940.87 1318,941.98 1318.5,941.29 1319,940.17 1319.5,940.79 1320,940.9 1320.5,941.36 1321,940.43 1321.5,941.06 1322,939.77 1322.5,940.25 1323,941.16 1323.5,940.64 1324,940.72 1324.5,939.81 1325,940.3 1325.5,940.34 1326,939.76 1326.5,940.38 1327,940.12 1327.5,940.89 1328,940.07 1328.5,939.72 1329,939.14 1329.5,939.14 1330,940.17 1330.5,938.93 1331,938.86 1331.5,938.93 1332,939.5 1332.5,939.98 1333,939.54 1333.5,939.83 1334,938.43 1334.5,938.28 1335,939.59 1335.5,938.72 1336,939.37 1336.5,938.66 1337,938.26 1337.5,938.38 1338,938.02 1338.5,939.41 1339,938.77 1339.5,938.29 1340,938.5 1340.5,938.33 1341,938.13 1341.5,937.45 1342,938.87 1342.5,938.23 1343,938.83 1343.5,937.81 1344,938.05 1344.5,937.3 1345,936.85 1345.5,938.36 1346,938.14 1346.5,937.08 1347,938.05 1347.5,937.82 1348,936.81 1348.5,937.27 1349,937.83 1349.5,936.91 1350,937.64 1350.5,936.29 1351,936.47 1351.5,936.98 1352,936 1352.5,936.07 1353,937.01 1353.5,936.22 1354,936.69 1354.5,935.62 1355,936 1355.5,935.39 1356,935.7 1356.5,935.37 1357,936.76 1357.5,935.51 1358,935.97 1358.5,935.14 1359,935.87 1359.5,935.58 1360,935.59 1360.5,934.96 1361,935.04 1361.5,936.28 1362,935.41 1362.5,935.19 1363,935.07 1363.5,935.21 1364,935.11 1364.5,934.72 1365,935.83 1365.5,935.22 1366,934.87 1366.5,935.83 1367,934.71 1367.5,935 1368,936 1368.5,934.7 1369,935.24 1369.5,935.93 1370,935.3 1370.5,936.29 1370.8,936 1371,942.24 1371.2,949.7 1371.5,946.09 1371.8,943 1372,942.91 1372.5,941.3 1373,940.23 1373.5,940.43 1374,938.24 1374.5,938.73 1375,937.08 1375.5,935.74 1376,935.3 1376.5,933.87 1377,934.06 1377.5,932.41 1378,932 1378.5,932.48 1379,931.68 1379.5,931.04 1380,930.58 1380.5,930.99 1381,930.04 1381.5,930.99 1382,929.4 1382.5,929.86 1383,929.6 1383.4,931 1383.5,934.95 1383.8,946.5 1384,942.92 1384.4,937 1384.5,937.42 1385,936.6 1385.5,936.39 1386,936.88 1386.5,936.72 1387,936.26 1387.5,936.4 1388,935.85 1388.5,936.02 1389,937.23 1389.5,936.28 1390,936.89 1390.5,935.9 1391,936.6 1391.4,930 1391.5,926.36 1391.8,915 1392,918.35 1392.3,924 1392.5,924.01 1393,923.65 1393.5,923.25 1394,923.7 1394.5,923.56 1395,923.4 1395.5,924.47 1396,923.7 1396.5,923.94 1397,924.86 1397.5,924.63 1398,924.84 1398.5,924.81 1399,923.51 1399.5,923.78 1400,924.2 1400.5,923.36 1401,924.53 1401.5,924.5 1402,923.94 1402.5,924.05 1403,924.5 1403.5,924.57 1404,923.77 1404.5,924.84 1405,923.96 1405.5,924.46 1406,923.65 1406.5,923.54 1407,924.97 1407.5,924.66 1408,924.62 1408.5,923.41 1409,923.41 1409.5,923.63 1410,923.7 1410.5,923.89 1411,924.04 1411.5,923.42 1412,923.91 1412.5,924.51 1413,923.68 1413.5,924.87 1414,924.39 1414.5,924.66 1415,923.83 1415.5,924.15 1416,924.6 1416.5,924 1417,923.38 1417.5,924.88 1418,924.78 1418.5,923.9 1419,923.46 1419.5,924.93 1420,924.48 1420.5,923.48 1421,923.84 1421.5,923.6 1422,924.82 1422.5,923.78 1423,925.05 1423.5,924.76 1424,923.56 1424.5,924.66 1425,924.12 1425.5,924.76 1426,924.91 1426.5,923.93 1427,923.58 1427.5,925.13 1428,924.19 1428.5,925.1 1429,924.68 1429.5,924.76 1430,924.93 1430.5,924.57 1431,924.26 1431.5,923.54 1432,924.7 1432.5,924.22 1433,924.37 1433.5,925.12 1434,923.68 1434.5,924.83 1435,923.54 1435.5,924.73 1436,924.91 1436.5,923.94 1437,924.45 1437.5,925.22 1438,924.62 1438.5,924.45 1439,923.93 1439.5,923.59 1440,924.13 1440.5,924.23 1441,923.85 1441.5,924.05 1442,923.74 1442.5,924.77 1443,924.7 1443.5,923.93 1444,924.4 1444.5,948.4 1445,947.24 1445.5,947 1446,946.36 1446.5,945.57 1447,945 1447.5,945.17 1448,943.5 1448.5,942.79 1449,943.23 1449.5,941.27 1450,941.3 1450.5,941.13 1451,940.44 1451.5,941.03 1452,940.27 1452.5,940.37 1453,939.02 1453.5,939.64 1454,939.24 1454.5,938.71 1455,938.5 1455.5,938.87 1456,938.88 1456.5,937.48 1457,937.69 1457.5,937.71 1458,937.33 1458.5,936.96 1459,937.25 1459.5,936.99 1460,937.79 1460.5,937.23 1461,936.52 1461.5,936.79 1462,937 1462.5,936.92 1463,936.7 1463.5,936.32 1464,936.12 1464.5,935.98 1465,937.72 1465.5,937.26 1466,936.03 1466.5,937.14 1467,937.59 1467.5,936.81 1468,935.96 1468.5,936.62 1469,936.49 1469.5,936.02 1470,936.63 1470.5,935.64 1471,937.26 1471.5,936.73 1472,936.67 1472.5,937.2 1473,936.66 1473.5,935.91 1474,935.88 1474.5,935.66 1475,935.43 1475.5,936.74 1476,936.83 1476.5,935.83 1477,935.6 1477.5,936.39 1478,936.73 1478.5,936.85 1479,935.46 1479.5,936.54 1480,936 1480.5,936.56 1481,936.37 1481.5,935.59 1482,935.3 1482.5,936.42 1483,935.48 1483.5,935.54 1484,935.83 1484.5,935.47 1485,936.27 1485.5,935.17 1486,934.78 1486.5,935.7 1487,935.78 1487.5,936.09 1488,935.85 1488.5,936.18 1489,936.22 1489.5,935.37 1490,935.35 1490.5,934.7 1491,934.92 1491.5,935.4 1492,934.46 1492.5,935.53 1493,934.55 1493.5,935.02 1494,935.94 1494.5,934.32 1495,934.2 1495.5,934.88 1496,934.4 1496.5,935.33 1497,934 1497.5,935.48 1498,935.47 1498.5,935.31 1499,934.63 1499.5,934.34 1500,934.7 1500.5,934.94 1501,934.63 1501.5,934.42 1502,934.22 1502.5,934.35 1503,934.71 1503.5,934.95 1504,935.05 1504.5,933.67 1505,933.86 1505.5,934.08 1506,934.24 1506.5,933.81 1507,933.49 1507.5,933.24 1508,933.62 1508.5,933.82 1509,934.69 1509.5,934.53 1510,934.41 1510.5,934.56 1511,934.49 1511.5,933.82 1512,934.12 1512.5,932.72 1513,933.78 1513.5,933.61 1514,933 1514.5,933.45 1515,934.09 1515.5,933.19 1516,933.45 1516.5,932.77 1517,932.8 1517.5,933.73 1518,932.14 1518.5,932.38 1519,933.22 1519.5,932.75 1520,932.8 1520.5,932 1521,932.97 1521.5,932.4 1522,932.72 1522.5,932.36 1523,932.51 1523.5,932.52 1524,932.16 1524.5,931.59 1525,931.65 1525.5,932.87 1526,932.2 1526.5,931.36 1527,932.65 1527.5,931.5 1528,931.16 1528.5,931.88 1529,931.32 1529.5,931.69 1530,931.75 1530.5,931.11 1531,931.67 1531.5,930.79 1532,931.45 1532.5,931.53 1533,930.56 1533.5,931.09 1534,930.43 1534.5,931.03 1535,931.74 1535.5,931.12 1536,931.36 1536.5,931.38 1537,930.16 1537.5,931.68 1538,931.14 1538.5,929.97 1539,931.22 1539.5,930.38 1540,929.92 1540.5,931.29 1541,930.4 1541.5,921.85 1541.6,920 1542,914.54 1542.5,906.6 1543,907.07 1543.5,909.34 1544,909.16 1544.5,910.61 1545,912.2 1545.5,912.75 1546,912.89 1546.5,914.72 1547,914.82 1547.5,915.76 1548,916.9 1548.5,917.74 1549,917.7 1549.5,919 1550,918.98 1550.5,919.9 1551,919.7 1551.5,919.87 1552,920.56 1552.5,920.54 1553,919.33 1553.5,920.42 1554,919.75 1554.5,920.57 1555,920.47 1555.5,920.79 1556,919.58 1556.5,920.09 1557,920.8 1557.5,921.24 1558,920.89 1558.5,919.72 1559,920.6 1559.5,920.74 1560,919.79 1560.5,920.55 1561,920.96 1561.5,919.67 1562,921.08 1562.5,920.59 1563,919.78 1563.5,919.63 1564,920.04 1564.5,920.69 1565,920.18 1565.5,919.3 1566,919.08 1566.5,919.2 1567,920.39 1567.5,919.24 1568,919.85 1568.5,919.33 1569,920 1569.5,919.4 1570,918.93 1570.5,920.2 1571,919.54 1571.5,919.77 1572,919.94 1572.5,920.14 1573,918.41 1573.5,918.96 1574,918.57 1574.5,919.15 1575,919.1 1575.5,919.71 1576,919.52 1576.5,918.08 1577,918.28 1577.5,919.36 1578,919.05 1578.5,918.47 1579,918.56 1579.5,917.93 1580,919.1 1580.5,918.23 1581,919.03 1581.5,918.49 1582,917.47 1582.5,917.86 1583,917.6 1583.5,918.76 1584,918.14 1584.5,917.1 1585,917.27 1585.5,917.55 1586,917.68 1586.5,917.81 1587,917.41 1587.5,917.29 1588,916.6 1588.5,917.57 1589,917.06 1589.5,916.44 1590,917.17 1590.5,918.05 1591,916.3 1591.5,916.42 1592,917.3 1592.5,916.52 1593,916.46 1593.5,916.81 1594,916.32 1594.5,916.81 1595,916.67 1595.5,917.38 1596,917.38 1596.5,915.6 1597,916.48 1597.5,916.8 1598,916.92 1598.5,916.68 1599,916.36 1599.5,916.3 1600,916 1600.5,915.68 1601,915.47 1601.5,916.32 1602,916.4 1602.5,916.44 1603,915.91 1603.5,915.16 1604,915.92 1604.5,915.81 1605,915.33 1605.5,915.48 1606,914.9 1606.5,915.19 1607,914.87 1607.5,914.17 1608,914.6 1608.5,914.51 1609,915.64 1609.5,914.66 1610,914.38 1610.5,914.09 1611,914.01 1611.5,914.14 1612,913.69 1612.5,913.39 1613,914.87 1613.5,914.05 1614,913.97 1614.5,914.12 1615,913.58 1615.5,913.27 1616,913.01 1616.5,913.37 1617,913.31 1617.5,913.99 1618,913.61 1618.5,914.24 1619,913.09 1619.5,914.07 1620,913.39 1620.5,912.42 1621,912.53 1621.5,913.18 1622,913.84 1622.5,912.64 1623,913.32 1623.5,912.63 1624,913.35 1624.5,911.84 1625,912.52 1625.5,913.2 1626,912.01 1626.5,911.91 1627,911.42 1627.5,911.6 1628,911.72 1628.5,912.44 1629,912 1629.5,911.44 1630,911.72 1630.5,911.31 1631,911.98 1631.5,912.4 1632,911.96 1632.5,911.1 1633,912.01 1633.5,912.37 1634,911.67 1634.5,910.68 1635,911.95 1635.5,912.01 1636,911 1636.5,910.58 1637,910.62 1637.5,911.2 1638,911.76 1638.5,911.28 1639,911.74 1639.5,910.41 1640,910.57 1640.5,911.28 1641,911.04 1641.5,910.56 1642,911 1642.5,910.33 1643,909.78 1643.5,910.37 1644,909.65 1644.5,910.65 1645,910.07 1645.5,910.31 1646,910.44 1646.5,909.78 1647,910.1 1647.5,909.24 1648,910.83 1648.5,910.13 1649,910.84 1649.5,909.11 1650,910.06 1650.5,910.21 1651,909.45 1651.5,908.97 1652,909.04 1652.5,908.96 1653,910.03 1653.5,908.76 1654,910.02 1654.5,909.26 1655,909.42 1655.5,909.46 1656,909.35 1656.5,909.48 1657,909.33 1657.5,908.79 1658,909.48 1658.5,908.56 1659,909.32 1659.5,909.36 1660,909.34 1660.5,908.44 1661,909.23 1661.5,909.55 1662,908.55 1662.5,908.19 1663,908.58 1663.5,909.28 1664,907.77 1664.5,907.5 1665,908.29 1665.5,908.56 1666,908.72 1666.5,907.93 1667,909.01 1667.5,907.59 1668,908.49 1668.5,907.23 1669,907.07 1669.5,907.21 1670,907.03 1670.5,907.77 1671,907.82 1671.5,907.09 1672,908.41 1672.5,907.32 1673,906.88 1673.5,906.88 1674,907.84 1674.5,908.12 1675,906.7 1675.5,906.41 1676,907.71 1676.5,906.69 1677,907.97 1677.5,907.05 1678,907.25 1678.5,906.67 1679,907.44 1679.5,906.78 1680,906.8 1680.5,906.42 1681,907.4 1681.5,905.91 1682,906.97 1682.5,905.71 1683,906.69 1683.5,906.19 1684,906.96 1684.5,905.45 1685,906.3 1685.5,905.96 1686,906.81 1686.5,906.8 1687,906.16 1687.5,905.37 1688,905.36 1688.5,905.32 1689,905.57 1689.5,905.14 1690,905.03 1690.5,905.97 1691,905.69 1691.5,905.01 1692,906.2 1692.5,904.74 1693,905.31 1693.5,904.51 1694,905.72 1694.5,905.67 1695,904.52 1695.5,905.33 1696,905.4 1696.5,904.36 1697,904.39 1697.5,904.6 1698,905.27 1698.5,903.9 1699,904.77 1699.5,904.56 1700,904.24 1700.5,904.4 1701,904.89 1701.5,903.61 1702,904.76 1702.5,903.76 1703,904.45 1703.5,904.54 1704,903.25 1704.5,904.42 1705,904.59 1705.5,903.28 1706,902.72 1706.5,902.82 1707,904.31 1707.5,902.51 1708,904.07 1708.5,902.64 1709,903.63 1709.5,902.42 1710,902.49 1710.5,903.35 1711,902.22 1711.5,902.61 1712,903.59 1712.5,903.16 1713,903.4 1713.5,903.51 1714,901.75 1714.5,902.05 1715,902.99 1715.5,902.74 1716,901.51 1716.5,902.28 1717,901.73 1717.5,902.03 1718,901.38 1718.5,901.16 1719,902.85 1719.5,901.57 1720,902.52 1720.5,901.1 1721,901.7 1721.5,901 1722,901.47 1722.5,900.95 1723,901.8 1723.5,900.77 1724,901.78 1724.5,901.29 1725,900.52 1725.5,900.9 1726,901.09 1726.5,901.79 1727,900.7 1727.5,900.4 1728,901.69 1728.5,901.48 1729,901.14 1729.5,900.26 1730,900.02 1730.5,900.12 1731,899.7 1731.5,899.59 1732,900.37 1732.5,900.13 1733,900.33 1733.5,899.92 1734,899.23 1734.5,900.38 1735,900.26 1735.5,900 1736,899.95 1736.5,900.14 1737,900.6 1737.5,900.35 1738,900 1738.5,899.37 1739,899.16 1739.5,899.28 1740,900.21 1740.5,899.1 1741,899.03 1741.5,899.02 1742,898.47 1742.5,899.95 1743,898.1 1743.5,899.12 1744,899.63 1744.5,898.36 1745,898.94 1745.5,898.46 1746,898.15 1746.5,898.01 1747,897.8 1747.5,899.05 1748,898.88 1748.5,899.05 1749,897.44 1749.5,898.54 1750,897.81 1750.5,898.33 1751,898" fill="none" stroke="#5a1878" stroke-width="1.6" />
</g>
<text x="102" y="120.8" font-size="19" fill="#111" textLength="96.8" lengthAdjust="spacing" class="sl">U_loop,coil</text>
<text x="102" y="238" font-size="19" fill="#1fb9c6" textLength="75.6" lengthAdjust="spacingAndGlyphs" class="sl">U_Bt,coil</text>
<text x="54.2" y="355" font-size="19" fill="#d9193c" textLength="90.8" lengthAdjust="spacingAndGlyphs" class="sl">U_Rog,coil</text>
<text x="102" y="471.9" font-size="19" fill="#74b81e" textLength="85.4" lengthAdjust="spacing" class="sl">U_Photod</text>
<text x="53.3" y="588.3" font-size="19" fill="#f0871f" textLength="102.4" lengthAdjust="spacing" class="sl">U_Diamagn</text>
<text x="100.8" y="706" font-size="19" fill="#2020b0" textLength="63.4" lengthAdjust="spacing" class="sl">Trigger</text>
<text x="54.7" y="863.3" font-size="25" fill="#e8820c" textLength="38.3" lengthAdjust="spacing" class="sl">B_t</text>
<text x="55" y="974" font-size="19" fill="#5a1878" textLength="23" lengthAdjust="spacingAndGlyphs" class="sl">I_p</text>
<path d="M10.1,102.2H78.2L84.1,115.4L78.2,128.6H10.1Q6.6,128.6 6.6,125.1V105.7Q6.6,102.2 10.1,102.2Z" fill="#e8e8e8" stroke="#1c1c1c" stroke-width="1.6" stroke-linejoin="round"/><path d="M33,102.2V128.6" stroke="#1c1c1c" stroke-width="1.6"/>
<text x="19.3" y="119" font-size="12.2" fill="#111" text-anchor="middle" textLength="16.2" lengthAdjust="spacingAndGlyphs">C 1</text>
<text x="57.2" y="119" font-size="12.2" fill="#111" text-anchor="middle" textLength="24" lengthAdjust="spacingAndGlyphs">20 V</text>
<path d="M10.1,219.4H78.2L84.1,232.6L78.2,245.8H10.1Q6.6,245.8 6.6,242.3V222.9Q6.6,219.4 10.1,219.4Z" fill="#e8f8fa" stroke="#21bccb" stroke-width="2" stroke-linejoin="round"/><path d="M33,219.4V245.8" stroke="#21bccb" stroke-width="2"/>
<text x="19.3" y="236.2" font-size="12.2" fill="#111" text-anchor="middle" textLength="16.4" lengthAdjust="spacingAndGlyphs">C 2</text>
<text x="57.2" y="236.2" font-size="12.2" fill="#111" text-anchor="middle" textLength="41.5" lengthAdjust="spacingAndGlyphs">300 mV</text>
<path d="M9.4,337.5H31.5L42.3,350L31.5,362.5H9.4Q6.4,362.5 6.4,359.5V340.5Q6.4,337.5 9.4,337.5Z" fill="#fde8ec" stroke="#ee5f7a" stroke-width="1.4" stroke-linejoin="round"/>
<text x="22.3" y="353.6" font-size="12.2" fill="#ea5a74" text-anchor="middle" textLength="16.4" lengthAdjust="spacingAndGlyphs">C 3</text>
<path d="M10.1,453.2H78.2L84.1,466.4L78.2,479.6H10.1Q6.6,479.6 6.6,476.1V456.7Q6.6,453.2 10.1,453.2Z" fill="#f1f8e8" stroke="#7cc022" stroke-width="2" stroke-linejoin="round"/><path d="M33,453.2V479.6" stroke="#7cc022" stroke-width="2"/>
<text x="19.3" y="470" font-size="12.2" fill="#111" text-anchor="middle" textLength="16.4" lengthAdjust="spacingAndGlyphs">C 4</text>
<text x="57.2" y="470" font-size="12.2" fill="#111" text-anchor="middle" textLength="41.5" lengthAdjust="spacingAndGlyphs">200 mV</text>
<path d="M9.4,571H31.5L42.3,583.5L31.5,596H9.4Q6.4,596 6.4,593V574Q6.4,571 9.4,571Z" fill="#fff0e2" stroke="#f7a04a" stroke-width="1.4" stroke-linejoin="round"/>
<text x="22.3" y="587.1" font-size="12.2" fill="#111" text-anchor="middle" textLength="16.4" lengthAdjust="spacingAndGlyphs">C 5</text>
<path d="M10.1,687.5H78.2L84.1,700.7L78.2,713.9H10.1Q6.6,713.9 6.6,710.4V691Q6.6,687.5 10.1,687.5Z" fill="#e6e6f5" stroke="#0c0c0c" stroke-width="1.6" stroke-linejoin="round"/><path d="M10.1,687.5H33V713.9H10.1Q6.6,713.9 6.6,710.4V691Q6.6,687.5 10.1,687.5Z" fill="#2626c2" stroke="#0c0c0c" stroke-width="1.6"/><path d="M33,687.5V713.9" stroke="#0c0c0c" stroke-width="1.6"/>
<text x="19.3" y="704.3" font-size="12.2" fill="#f4f4ff" text-anchor="middle" textLength="16.4" lengthAdjust="spacingAndGlyphs">C 6</text>
<text x="57.2" y="704.3" font-size="12.2" fill="#3a2fc0" text-anchor="middle" textLength="17" lengthAdjust="spacingAndGlyphs">3 V</text>
<path d="M9.4,851H31.5L42.3,863.5L31.5,876H9.4Q6.4,876 6.4,873V854Q6.4,851 9.4,851Z" fill="#fdefe2" stroke="#f0953a" stroke-width="1.4" stroke-linejoin="round" clip-path="url(#c6)"/>
<text x="22.3" y="867.1" font-size="12.2" fill="#111" text-anchor="middle" textLength="19.5" lengthAdjust="spacingAndGlyphs">M 1</text>
<path d="M9.4,956.7H31.5L42.3,969.2L31.5,981.7H9.4Q6.4,981.7 6.4,978.7V959.7Q6.4,956.7 9.4,956.7Z" fill="#f1e6f5" stroke="#8d5aa8" stroke-width="1.4" stroke-linejoin="round"/>
<text x="22.3" y="972.8" font-size="12.2" fill="#7e4a9c" text-anchor="middle" textLength="19.5" lengthAdjust="spacingAndGlyphs">M 2</text>
<path d="M44.8,58H65.2L55.3,67.8Z" fill="#f58a1f"/>
<path d="M45,643.5H65.2V663.5H59.6L55.3,670.5L51,663.5H45Z" fill="#f58a1f"/>
<path d="M47.2,645.6H63V661.4H58.4L55.3,666.4L52.2,661.4H47.2Z" fill="#0a0a0a"/>
<text x="55.2" y="659.6" font-size="15.5" fill="#f58a1f" text-anchor="middle" font-weight="bold">T</text>
<path d="M1730,700.5L1741.7,690.5V699H1751V702H1741.7V710.5Z" fill="#2222bb"/>
<path d="M1711.5,64.3H1742.5Q1744.7,64.3 1744.7,66.5V97.5Q1744.7,100.5 1742.6,98.3L1710,66.2Q1708.5,64.3 1711.5,64.3Z" fill="#4d4d4d" stroke="#0e0e0e" stroke-width="1.4" stroke-linejoin="round"/>
<circle cx="1737.2" cy="71.7" r="3.9" fill="none" stroke="#9a9a9a" stroke-width="1.2"/><path d="M1734.3,74.6L1728.3,80.3" stroke="#9a9a9a" stroke-width="2.2" stroke-linecap="round"/>
<circle cx="1761.5" cy="503.6" r="2.1" fill="#bdbdbd"/><circle cx="1761.5" cy="512.2" r="2.1" fill="#bdbdbd"/><circle cx="1761.5" cy="520.5" r="2.1" fill="#bdbdbd"/>
<path d="M3,988Q3,984 7,984H89Q93,984 93,988V1075Q93,1079 89,1079H7Q3,1079 3,1075Z" fill="#c8c8c8"/><path d="M3,988Q3,984 7,984H89Q93,984 93,988V1002.6H3Z" fill="#1e1e1e"/>
<rect x="3" y="1005" width="90" height="17" fill="#ff0000" />
<path d="M11.2,1006.9L18.6,1020.9H3.6Z" fill="#f7ec13" stroke="#3b3060" stroke-width="1.2" stroke-linejoin="round"/><path d="M11.2,1010.9V1016.9M11.2,1018.2V1019.5" stroke="#8f8a55" stroke-width="1.7"/>
<text x="19.8" y="1018" font-size="15.4" fill="#fff" textLength="56.8" lengthAdjust="spacing">Clipping</text>
<text x="8.6" y="998" font-size="15.6" fill="#efe645" textLength="27.6" lengthAdjust="spacingAndGlyphs" stroke="#efe645" stroke-width="0.45">Ch 1</text>
<text x="8.7" y="1036.7" font-size="15.2" fill="#0a0a0a" textLength="42.7" lengthAdjust="spacingAndGlyphs">5 V/div</text>
<text x="8.7" y="1055.8" font-size="15.2" fill="#0a0a0a" textLength="35" lengthAdjust="spacingAndGlyphs">1 MΩ</text>
<text x="8.7" y="1074.2" font-size="15.2" fill="#0a0a0a" textLength="51.5" lengthAdjust="spacingAndGlyphs">200 kHz</text>
<text x="75" y="1068.2" font-size="9.5" fill="#111" font-weight="bold">B</text>
<text x="81.2" y="1071.4" font-size="9" fill="#111" font-weight="bold">w</text>
<path d="M98,988Q98,984 102,984H184Q188,984 188,988V1075Q188,1079 184,1079H102Q98,1079 98,1075Z" fill="#c8c8c8"/><path d="M98,988Q98,984 102,984H184Q188,984 188,988V1002.6H98Z" fill="#1d4146"/>
<rect x="98" y="1005" width="90" height="17" fill="#ff0000" />
<path d="M106.2,1006.9L113.6,1020.9H98.6Z" fill="#f7ec13" stroke="#3b3060" stroke-width="1.2" stroke-linejoin="round"/><path d="M106.2,1010.9V1016.9M106.2,1018.2V1019.5" stroke="#8f8a55" stroke-width="1.7"/>
<text x="114.8" y="1018" font-size="15.4" fill="#fff" textLength="56.8" lengthAdjust="spacing">Clipping</text>
<text x="103.6" y="998" font-size="15.6" fill="#2fd0dd" textLength="29.5" lengthAdjust="spacingAndGlyphs" stroke="#2fd0dd" stroke-width="0.45">Ch 2</text>
<text x="103.7" y="1036.7" font-size="15.2" fill="#0a0a0a" textLength="72.9" lengthAdjust="spacingAndGlyphs">250 mV/div</text>
<text x="103.7" y="1055.8" font-size="15.2" fill="#0a0a0a" textLength="35" lengthAdjust="spacingAndGlyphs">1 MΩ</text>
<text x="103.7" y="1074.2" font-size="15.2" fill="#0a0a0a" textLength="51.5" lengthAdjust="spacingAndGlyphs">200 kHz</text>
<text x="170" y="1068.2" font-size="9.5" fill="#111" font-weight="bold">B</text>
<text x="176.2" y="1071.4" font-size="9" fill="#111" font-weight="bold">w</text>
<path d="M193,988Q193,984 197,984H279Q283,984 283,988V1075Q283,1079 279,1079H197Q193,1079 193,1075Z" fill="#c8c8c8"/><path d="M193,988Q193,984 197,984H279Q283,984 283,988V1002.6H193Z" fill="#47282d"/>
<rect x="193" y="1005" width="90" height="17" fill="#ff0000" />
<path d="M201.2,1006.9L208.6,1020.9H193.6Z" fill="#f7ec13" stroke="#3b3060" stroke-width="1.2" stroke-linejoin="round"/><path d="M201.2,1010.9V1016.9M201.2,1018.2V1019.5" stroke="#8f8a55" stroke-width="1.7"/>
<text x="209.8" y="1018" font-size="15.4" fill="#fff" textLength="56.8" lengthAdjust="spacing">Clipping</text>
<text x="198.6" y="998" font-size="15.6" fill="#f3ecec" textLength="29.5" lengthAdjust="spacingAndGlyphs" stroke="#f3ecec" stroke-width="0.45">Ch 3</text>
<text x="198.7" y="1036.7" font-size="15.2" fill="#0a0a0a" textLength="72.9" lengthAdjust="spacingAndGlyphs">450 mV/div</text>
<text x="198.7" y="1055.8" font-size="15.2" fill="#0a0a0a" textLength="35" lengthAdjust="spacingAndGlyphs">1 MΩ</text>
<text x="198.7" y="1074.2" font-size="15.2" fill="#0a0a0a" textLength="51.5" lengthAdjust="spacingAndGlyphs">200 kHz</text>
<text x="265" y="1068.2" font-size="9.5" fill="#111" font-weight="bold">B</text>
<text x="271.2" y="1071.4" font-size="9" fill="#111" font-weight="bold">w</text>
<path d="M288,1007Q288,1003 292,1003H374Q378,1003 378,1007V1075Q378,1079 374,1079H292Q288,1079 288,1075Z" fill="#c8c8c8"/><path d="M288,1007Q288,1003 292,1003H374Q378,1003 378,1007V1021.5H288Z" fill="#3b4a24"/>
<text x="293.6" y="1017" font-size="15.6" fill="#8ecb3c" textLength="29.5" lengthAdjust="spacingAndGlyphs" stroke="#8ecb3c" stroke-width="0.45">Ch 4</text>
<text x="293.7" y="1036.7" font-size="15.2" fill="#0a0a0a" textLength="72.9" lengthAdjust="spacingAndGlyphs">200 mV/div</text>
<text x="293.7" y="1055.8" font-size="15.2" fill="#0a0a0a" textLength="35" lengthAdjust="spacingAndGlyphs">1 MΩ</text>
<text x="293.7" y="1074.2" font-size="15.2" fill="#0a0a0a" textLength="51.5" lengthAdjust="spacingAndGlyphs">200 kHz</text>
<text x="360" y="1068.2" font-size="9.5" fill="#111" font-weight="bold">B</text>
<text x="366.2" y="1071.4" font-size="9" fill="#111" font-weight="bold">w</text>
<path d="M383,1007Q383,1003 387,1003H469Q473,1003 473,1007V1075Q473,1079 469,1079H387Q383,1079 383,1075Z" fill="#c8c8c8"/><path d="M383,1007Q383,1003 387,1003H469Q473,1003 473,1007V1021.5H383Z" fill="#4b3521"/>
<text x="388.6" y="1017" font-size="15.6" fill="#f7983a" textLength="29.2" lengthAdjust="spacingAndGlyphs" stroke="#f7983a" stroke-width="0.45">Ch 5</text>
<text x="388.7" y="1036.7" font-size="15.2" fill="#0a0a0a" textLength="42.4" lengthAdjust="spacingAndGlyphs">1 V/div</text>
<text x="388.7" y="1055.8" font-size="15.2" fill="#0a0a0a" textLength="35" lengthAdjust="spacingAndGlyphs">1 MΩ</text>
<text x="388.7" y="1074.2" font-size="15.2" fill="#0a0a0a" textLength="51.5" lengthAdjust="spacingAndGlyphs">200 kHz</text>
<text x="455" y="1068.2" font-size="9.5" fill="#111" font-weight="bold">B</text>
<text x="461.2" y="1071.4" font-size="9" fill="#111" font-weight="bold">w</text>
<path d="M478,988Q478,984 482,984H564Q568,984 568,988V1075Q568,1079 564,1079H482Q478,1079 478,1075Z" fill="#c8c8c8"/><path d="M478,988Q478,984 482,984H564Q568,984 568,988V1002.6H478Z" fill="#2727c0"/>
<rect x="478" y="1005" width="90" height="17" fill="#ff0000" />
<path d="M486.2,1006.9L493.6,1020.9H478.6Z" fill="#f7ec13" stroke="#3b3060" stroke-width="1.2" stroke-linejoin="round"/><path d="M486.2,1010.9V1016.9M486.2,1018.2V1019.5" stroke="#8f8a55" stroke-width="1.7"/>
<text x="494.8" y="1018" font-size="15.4" fill="#fff" textLength="56.8" lengthAdjust="spacing">Clipping</text>
<text x="483.6" y="998" font-size="15.6" fill="#ffffff" textLength="29.8" lengthAdjust="spacingAndGlyphs" stroke="#ffffff" stroke-width="0.45">Ch 6</text>
<text x="483.7" y="1036.7" font-size="15.2" fill="#0a0a0a" textLength="72" lengthAdjust="spacingAndGlyphs">750 mV/div</text>
<text x="483.7" y="1055.8" font-size="15.2" fill="#0a0a0a" textLength="35" lengthAdjust="spacingAndGlyphs">1 MΩ</text>
<text x="483.7" y="1074.2" font-size="15.2" fill="#0a0a0a" textLength="51.5" lengthAdjust="spacingAndGlyphs">200 kHz</text>
<text x="550" y="1068.2" font-size="9.5" fill="#111" font-weight="bold">B</text>
<text x="556.2" y="1071.4" font-size="9" fill="#111" font-weight="bold">w</text>
<path d="M573,988Q573,984 577,984H659Q663,984 663,988V1075Q663,1079 659,1079H577Q573,1079 573,1075Z" fill="#c8c8c8"/><path d="M573,988Q573,984 577,984H659Q663,984 663,988V1002.6H573Z" fill="#4b3521"/>
<rect x="573" y="1005" width="90" height="17" fill="#ff0000" />
<path d="M581.2,1006.9L588.6,1020.9H573.6Z" fill="#f7ec13" stroke="#3b3060" stroke-width="1.2" stroke-linejoin="round"/><path d="M581.2,1010.9V1016.9M581.2,1018.2V1019.5" stroke="#8f8a55" stroke-width="1.7"/>
<text x="589.8" y="1018" font-size="15.4" fill="#fff" textLength="65" lengthAdjust="spacingAndGlyphs">Empty i…</text>
<text x="578.6" y="998" font-size="15.6" fill="#f7983a" textLength="48" lengthAdjust="spacing" stroke="#f7983a" stroke-width="0.45">Math 1</text>
<text x="578.7" y="1036.7" font-size="15.2" fill="#0a0a0a" font-weight="bold" textLength="81.8" lengthAdjust="spacingAndGlyphs">66.0 mT/div</text>
<text x="578.7" y="1055.8" font-size="15.2" fill="#0a0a0a" textLength="73.7" lengthAdjust="spacingAndGlyphs">Intg(Ch2)…</text>
<path d="M668,988Q668,984 672,984H754Q758,984 758,988V1075Q758,1079 754,1079H672Q668,1079 668,1075Z" fill="#c8c8c8"/><path d="M668,988Q668,984 672,984H754Q758,984 758,988V1002.6H668Z" fill="#2f2539"/>
<rect x="668" y="1005" width="90" height="17" fill="#ff0000" />
<path d="M676.2,1006.9L683.6,1020.9H668.6Z" fill="#f7ec13" stroke="#3b3060" stroke-width="1.2" stroke-linejoin="round"/><path d="M676.2,1010.9V1016.9M676.2,1018.2V1019.5" stroke="#8f8a55" stroke-width="1.7"/>
<text x="684.8" y="1018" font-size="15.4" fill="#fff" textLength="65" lengthAdjust="spacingAndGlyphs">Empty i…</text>
<text x="673.6" y="998" font-size="15.6" fill="#f1f1f1" textLength="49" lengthAdjust="spacing" stroke="#f1f1f1" stroke-width="0.45">Math 2</text>
<text x="673.7" y="1036.7" font-size="15.2" fill="#0a0a0a" font-weight="bold" textLength="79" lengthAdjust="spacingAndGlyphs">174.18 A/…</text>
<text x="673.7" y="1055.8" font-size="15.2" fill="#0a0a0a" textLength="74.8" lengthAdjust="spacingAndGlyphs">-Intg(Ch3…</text>
<rect x="1118" y="1000" width="1" height="76" fill="#5b514c" />
<rect x="1269" y="1000" width="1" height="76" fill="#5b514c" />
<rect x="1811" y="1000" width="1" height="76" fill="#5b514c" />
<rect x="1129.2" y="999.5" width="39.5" height="79" rx="5" ry="5" fill="url(#bt)" stroke="#6d625c" stroke-width="1"/>
<rect x="1133.4" y="1006.8" width="31" height="2" fill="#b11f24" />
<text x="1149" y="1032.4" font-size="15.5" fill="#f4f4f4" text-anchor="middle" textLength="27" lengthAdjust="spacingAndGlyphs">Add</text>
<text x="1149" y="1048.4" font-size="15.5" fill="#f4f4f4" text-anchor="middle" textLength="30" lengthAdjust="spacingAndGlyphs">New</text>
<text x="1149" y="1064.4" font-size="15.5" fill="#f4f4f4" text-anchor="middle" textLength="33.5" lengthAdjust="spacingAndGlyphs">Math</text>
<rect x="1174" y="999.5" width="39.5" height="79" rx="5" ry="5" fill="url(#bt)" stroke="#6d625c" stroke-width="1"/>
<rect x="1178.2" y="1006.8" width="31" height="2" fill="#b9b9cf" />
<text x="1193.8" y="1032.4" font-size="15.5" fill="#f4f4f4" text-anchor="middle" textLength="27" lengthAdjust="spacingAndGlyphs">Add</text>
<text x="1193.8" y="1048.4" font-size="15.5" fill="#f4f4f4" text-anchor="middle" textLength="30" lengthAdjust="spacingAndGlyphs">New</text>
<text x="1193.8" y="1064.4" font-size="15.5" fill="#f4f4f4" text-anchor="middle" textLength="21.5" lengthAdjust="spacingAndGlyphs">Ref</text>
<rect x="1219.3" y="999.5" width="39.5" height="79" rx="5" ry="5" fill="url(#bt)" stroke="#6d625c" stroke-width="1"/>
<rect x="1223.5" y="1006.8" width="31" height="2" fill="#c465f2" />
<text x="1239.1" y="1032.4" font-size="15.5" fill="#f4f4f4" text-anchor="middle" textLength="27" lengthAdjust="spacingAndGlyphs">Add</text>
<text x="1239.1" y="1048.4" font-size="15.5" fill="#f4f4f4" text-anchor="middle" textLength="30" lengthAdjust="spacingAndGlyphs">New</text>
<text x="1239.1" y="1064.4" font-size="15.5" fill="#f4f4f4" text-anchor="middle" textLength="22.5" lengthAdjust="spacingAndGlyphs">Bus</text>
<rect x="1280.4" y="1003.7" width="199" height="74.6" rx="4" ry="4" fill="#c8c8c8" stroke="#101010" stroke-width="1.2"/>
<path d="M1281.0,1007.7Q1281.0,1004.3 1284.4,1004.3H1475.4Q1478.8000000000002,1004.3 1478.8000000000002,1007.7V1022.6H1281.0Z" fill="#58595b"/>
<text x="1286" y="1018" font-size="15.8" fill="#f6f6f6" textLength="73.2" lengthAdjust="spacing">Horizontal</text>
<text x="1285.1" y="1036.8" font-size="15.2" fill="#0a0a0a" textLength="53" lengthAdjust="spacingAndGlyphs">4 ms/div</text>
<text x="1391.4" y="1036.8" font-size="15.2" fill="#0a0a0a" textLength="38.5" lengthAdjust="spacingAndGlyphs">40 ms</text>
<text x="1285.1" y="1055.8" font-size="15.2" fill="#0a0a0a" textLength="67.3" lengthAdjust="spacingAndGlyphs">SR: 1 MS/s</text>
<text x="1392.3" y="1055.8" font-size="15.2" fill="#0a0a0a" textLength="42.7" lengthAdjust="spacingAndGlyphs">1 µs/pt</text>
<text x="1285.1" y="1074.6" font-size="15.2" fill="#0a0a0a" textLength="70.5" lengthAdjust="spacingAndGlyphs">RL: 40 kpts</text>
<text x="1405.7" y="1074.6" font-size="15.2" fill="#0a0a0a" textLength="21.4" lengthAdjust="spacingAndGlyphs">3%</text>
<path d="M1390.8,1063H1400.4V1071.6H1397.4L1395.6,1074.6L1393.8,1071.6H1390.8Z" fill="#f58a1f"/><path d="M1391.9,1064H1399.3V1070.5H1396.6L1395.6,1072.2L1394.6,1070.5H1391.9Z" fill="#0a0a0a"/><text x="1395.6" y="1070" font-size="7.5" fill="#ffffff" text-anchor="middle" font-weight="bold">T</text>
<rect x="1485.9" y="1003.7" width="158.7" height="74.6" rx="4" ry="4" fill="#c8c8c8" stroke="#101010" stroke-width="1.2"/>
<path d="M1486.5,1007.7Q1486.5,1004.3 1489.9,1004.3H1640.6000000000001Q1644.0000000000002,1004.3 1644.0000000000002,1007.7V1022.6H1486.5Z" fill="#58595b"/>
<text x="1491.5" y="1018" font-size="15.8" fill="#f6f6f6" textLength="49.2" lengthAdjust="spacingAndGlyphs">Trigger</text>
<rect x="1490.6" y="1025.3" width="29" height="15.2" rx="6" ry="6" fill="#2424c4" stroke="#0a0a0a" stroke-width="1.2"/>
<text x="1505.1" y="1036.6" font-size="15" fill="#fff" text-anchor="middle">6</text>
<path d="M1530,1037H1534.5L1542.5,1027.5H1546.5" fill="none" stroke="#3b3b8e" stroke-width="1.3"/>
<text x="1556.2" y="1036.6" font-size="15.2" fill="#0a0a0a" textLength="21.6" lengthAdjust="spacingAndGlyphs">3 V</text>
<rect x="1650.9" y="1003.7" width="148.4" height="74.6" rx="4" ry="4" fill="#c8c8c8" stroke="#101010" stroke-width="1.2"/>
<path d="M1651.5,1007.7Q1651.5,1004.3 1654.9,1004.3H1795.3000000000002Q1798.7000000000003,1004.3 1798.7000000000003,1007.7V1022.6H1651.5Z" fill="#58595b"/>
<text x="1656.5" y="1018" font-size="15.8" fill="#f6f6f6" textLength="77.4" lengthAdjust="spacing">Acquisition</text>
<text x="1655.6" y="1036.6" font-size="15.2" fill="#0a0a0a" textLength="51.1" lengthAdjust="spacingAndGlyphs">Manual,</text>
<text x="1736.5" y="1036.6" font-size="15.2" fill="#0a0a0a" textLength="48.7" lengthAdjust="spacingAndGlyphs">Analyze</text>
<text x="1655.6" y="1055.4" font-size="15.2" fill="#0a0a0a" textLength="106.6" lengthAdjust="spacingAndGlyphs">High Res: 16 bits</text>
<text x="1655.6" y="1074.4" font-size="15.2" fill="#0a0a0a" textLength="69.4" lengthAdjust="spacingAndGlyphs">Single: 1 /1</text>
<rect x="1822.2" y="999.5" width="89.6" height="34.7" rx="6" ry="6" fill="#f5222d" stroke="#ff5b5b" stroke-width="1" stroke-opacity="0.5"/>
<text x="1866.9" y="1020.2" font-size="14.5" fill="#fff" text-anchor="middle" font-weight="bold" textLength="55.6" lengthAdjust="spacingAndGlyphs">Stopped</text>
<rect x="1822.2" y="1040.5" width="89.6" height="37.1" rx="5" ry="5" fill="#c8c8c8" />
<text x="1826.7" y="1054.6" font-size="15.2" fill="#0a0a0a" textLength="80.3" lengthAdjust="spacingAndGlyphs">16 Apr 2025</text>
<text x="1826.7" y="1072.2" font-size="15.2" fill="#0a0a0a" textLength="80.8" lengthAdjust="spacingAndGlyphs">12:10:00 PM</text>
<path d="M1920,29.5H1769.5V995H1920" fill="none" stroke="#6a5f59" stroke-width="1"/>
<text x="1785.6" y="25.8" font-size="30" fill="#ffffff" font-weight="bold" textLength="117.6" lengthAdjust="spacingAndGlyphs" stroke="#fff" stroke-width="0.5">Tektronix</text>
<path d="M1815.6,2H1823.3V27H1815.6Z" fill="url(#mb)"/><path d="M1815.3,25.9H1820.8L1830.6,9.8H1826.4Z" fill="#1fb6dc"/><path d="M1835.4,4.6L1836,10L1830.8,9.6Z" fill="#fff"/>
<text x="1844.6" y="43.7" font-size="15" fill="#f0f0f0" text-anchor="middle" font-weight="bold" textLength="84" lengthAdjust="spacing">Add New...</text>
<rect x="1778.3" y="54.4" width="62.4" height="36.2" rx="5.5" ry="5.5" fill="url(#bt)" stroke="#6d625c" stroke-width="1"/>
<text x="1809.5" y="76.8" font-size="15.5" fill="#f4f4f4" text-anchor="middle" textLength="50.5" lengthAdjust="spacingAndGlyphs">Cursors</text>
<rect x="1850.3" y="54.4" width="62.4" height="36.2" rx="5.5" ry="5.5" fill="url(#bt)" stroke="#6d625c" stroke-width="1"/>
<text x="1881.5" y="76.8" font-size="15.5" fill="#f4f4f4" text-anchor="middle" textLength="49.5" lengthAdjust="spacing">Callout</text>
<rect x="1778.3" y="100.4" width="62.4" height="36.2" rx="5.5" ry="5.5" fill="url(#bt)" stroke="#6d625c" stroke-width="1"/>
<text x="1809.5" y="122.8" font-size="15.5" fill="#f4f4f4" text-anchor="middle" textLength="58.4" lengthAdjust="spacingAndGlyphs">Measure</text>
<rect x="1850.3" y="100.4" width="62.4" height="36.2" rx="5.5" ry="5.5" fill="url(#bt)" stroke="#6d625c" stroke-width="1"/>
<text x="1881.5" y="122.8" font-size="15.5" fill="#f4f4f4" text-anchor="middle" textLength="46" lengthAdjust="spacingAndGlyphs">Search</text>
<rect x="1778.3" y="146.4" width="62.4" height="36.2" rx="5.5" ry="5.5" fill="url(#bt)" stroke="#6d625c" stroke-width="1"/>
<text x="1809.5" y="161.5" font-size="15.5" fill="#f4f4f4" text-anchor="middle" textLength="48" lengthAdjust="spacingAndGlyphs">Results</text>
<text x="1809.5" y="177.2" font-size="15.5" fill="#f4f4f4" text-anchor="middle" textLength="36" lengthAdjust="spacingAndGlyphs">Table</text>
<rect x="1850.3" y="146.4" width="62.4" height="36.2" rx="5.5" ry="5.5" fill="url(#bt)" stroke="#6d625c" stroke-width="1"/>
<text x="1881.5" y="168.8" font-size="15.5" fill="#f4f4f4" text-anchor="middle" textLength="28" lengthAdjust="spacing">Plot</text>
<rect x="1773" y="189" width="144" height="1" fill="#5b514c" />
<rect x="1778.3" y="196.4" width="62.4" height="36.2" rx="5.5" ry="5.5" fill="url(#bt)" stroke="#6d625c" stroke-width="1"/>
<rect x="1850.3" y="196.4" width="62.4" height="36.2" rx="5.5" ry="5.5" fill="url(#bt)" stroke="#6d625c" stroke-width="1"/>
<text x="1881.5" y="218.8" font-size="15.5" fill="#f4f4f4" text-anchor="middle" textLength="50" lengthAdjust="spacing">More...</text>
<rect x="1773" y="240.7" width="144" height="1" fill="#5b514c" />
<g fill="none" stroke="#c9c9c9"><rect x="1798.5" y="203" width="21" height="20" stroke-width="1.6" stroke-dasharray="3.2 2.4"/><circle cx="1811" cy="210.8" r="4.6" stroke-width="1.4"/><path d="M1807.6,214.2L1802.5,218.6" stroke-width="2.2" stroke-linecap="round"/></g><path d="M1816.5,217.5L1823.8,221L1820.8,221.9L1822.6,225.6L1821.2,226.3L1819.4,222.7L1817.3,224.6Z" fill="#c9c9c9"/>
</svg></body></html>
